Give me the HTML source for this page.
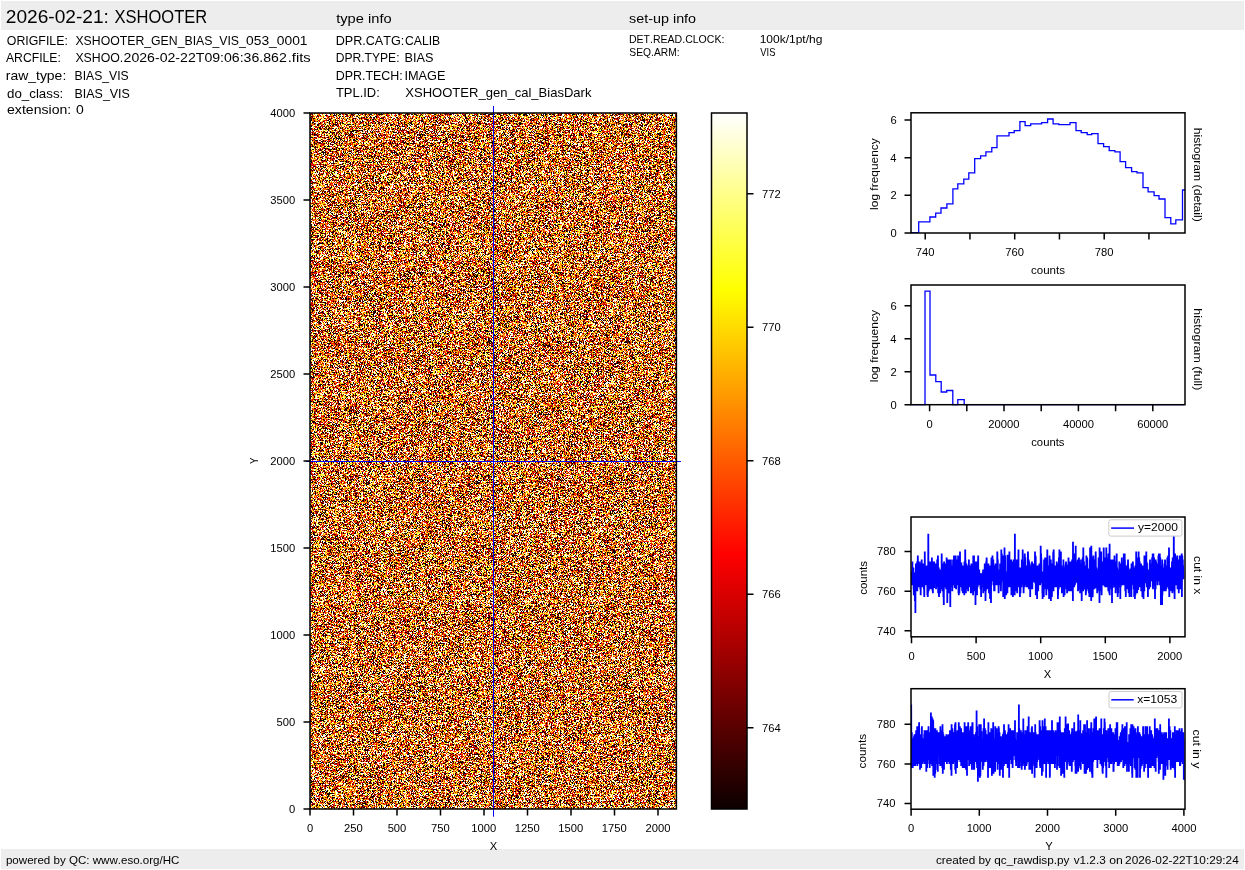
<!DOCTYPE html><html><head><meta charset="utf-8"><style>html,body{margin:0;padding:0;background:#fff;overflow:hidden}svg{display:block;will-change:transform}text{font-family:'Liberation Sans', sans-serif;font-kerning:none}</style></head><body>
<svg width="1245" height="870" viewBox="0 0 1245 870">
<rect x="0" y="0" width="1245" height="870" fill="#fff"/>
<defs>
<filter id="noise" x="0" y="0" width="1" height="1" filterUnits="objectBoundingBox" color-interpolation-filters="sRGB">
<feTurbulence type="fractalNoise" baseFrequency="2.31" numOctaves="1" seed="5" result="a"/>
<feTurbulence type="fractalNoise" baseFrequency="3.71" numOctaves="1" seed="17" result="b"/>
<feComposite in="a" in2="b" operator="arithmetic" k1="0" k2="0.5" k3="0.5" k4="0" result="c"/>
<feColorMatrix in="c" type="matrix" values="0.5 0.5 0 0 0  0.5 0.5 0 0 0  0.5 0.5 0 0 0  0 0 0 0 1"/>
<feComponentTransfer><feFuncR type="discrete" tableValues="0.042 0.042 0.042 0.042 0.042 0.042 0.042 0.042 0.042 0.042 0.042 0.042 0.042 0.042 0.042 0.042 0.042 0.042 0.042 0.042 0.042 0.042 0.042 0.042 0.042 0.042 0.042 0.042 0.042 0.042 0.042 0.042 0.042 0.042 0.042 0.042 0.042 0.042 0.042 0.042 0.042 0.042 0.042 0.042 0.042 0.042 0.042 0.042 0.042 0.042 0.042 0.042 0.042 0.042 0.042 0.042 0.042 0.042 0.042 0.042 0.042 0.042 0.042 0.042 0.042 0.042 0.042 0.042 0.042 0.042 0.042 0.042 0.042 0.042 0.042 0.042 0.042 0.042 0.042 0.042 0.042 0.042 0.042 0.042 0.042 0.042 0.042 0.042 0.042 0.042 0.042 0.042 0.042 0.042 0.042 0.042 0.042 0.042 0.042 0.042 0.042 0.042 0.042 0.042 0.042 0.042 0.042 0.042 0.042 0.042 0.042 0.042 0.042 0.097 0.097 0.097 0.349 0.349 0.349 0.6 0.6 0.852 0.852 0.852 1 1 1 1 1 1 1 1 1 1 1 1 1 1 1 1 1 1 1 1 1 1 1 1 1 1 1 1 1 1 1 1 1 1 1 1 1 1 1 1 1 1 1 1 1 1 1 1 1 1 1 1 1 1 1 1 1 1 1 1 1 1 1 1 1 1 1 1 1 1 1 1 1 1 1 1 1 1 1 1 1 1 1 1 1 1 1 1 1 1 1 1 1 1 1 1 1 1 1 1 1 1 1 1 1 1 1 1 1 1 1 1 1 1 1 1 1 1 1 1 1 1 1 1 1 1 1 1 1 1 1 1"/><feFuncG type="discrete" tableValues="0 0 0 0 0 0 0 0 0 0 0 0 0 0 0 0 0 0 0 0 0 0 0 0 0 0 0 0 0 0 0 0 0 0 0 0 0 0 0 0 0 0 0 0 0 0 0 0 0 0 0 0 0 0 0 0 0 0 0 0 0 0 0 0 0 0 0 0 0 0 0 0 0 0 0 0 0 0 0 0 0 0 0 0 0 0 0 0 0 0 0 0 0 0 0 0 0 0 0 0 0 0 0 0 0 0 0 0 0 0 0 0 0 0 0 0 0 0 0 0 0 0 0 0 0.104 0.104 0.104 0.355 0.355 0.607 0.607 0.607 0.859 0.859 1 1 1 1 1 1 1 1 1 1 1 1 1 1 1 1 1 1 1 1 1 1 1 1 1 1 1 1 1 1 1 1 1 1 1 1 1 1 1 1 1 1 1 1 1 1 1 1 1 1 1 1 1 1 1 1 1 1 1 1 1 1 1 1 1 1 1 1 1 1 1 1 1 1 1 1 1 1 1 1 1 1 1 1 1 1 1 1 1 1 1 1 1 1 1 1 1 1 1 1 1 1 1 1 1 1 1 1 1 1 1 1 1 1 1 1 1 1 1 1 1 1"/><feFuncB type="discrete" tableValues="0 0 0 0 0 0 0 0 0 0 0 0 0 0 0 0 0 0 0 0 0 0 0 0 0 0 0 0 0 0 0 0 0 0 0 0 0 0 0 0 0 0 0 0 0 0 0 0 0 0 0 0 0 0 0 0 0 0 0 0 0 0 0 0 0 0 0 0 0 0 0 0 0 0 0 0 0 0 0 0 0 0 0 0 0 0 0 0 0 0 0 0 0 0 0 0 0 0 0 0 0 0 0 0 0 0 0 0 0 0 0 0 0 0 0 0 0 0 0 0 0 0 0 0 0 0 0 0 0 0 0 0 0 0 0.166 0.166 0.166 0.543 0.543 0.543 0.921 0.921 1 1 1 1 1 1 1 1 1 1 1 1 1 1 1 1 1 1 1 1 1 1 1 1 1 1 1 1 1 1 1 1 1 1 1 1 1 1 1 1 1 1 1 1 1 1 1 1 1 1 1 1 1 1 1 1 1 1 1 1 1 1 1 1 1 1 1 1 1 1 1 1 1 1 1 1 1 1 1 1 1 1 1 1 1 1 1 1 1 1 1 1 1 1 1 1 1 1 1 1 1 1 1 1 1 1 1 1 1 1 1 1 1 1"/></feComponentTransfer>
</filter>
<linearGradient id="cbar" x1="0" y1="0" x2="0" y2="1"><stop offset="0.00000" stop-color="rgb(255,255,255)"/><stop offset="0.25397" stop-color="rgb(255,255,0)"/><stop offset="0.63492" stop-color="rgb(255,0,0)"/><stop offset="1.00000" stop-color="rgb(11,0,0)"/></linearGradient>
<clipPath id="cpx"><rect x="911" y="517" width="274" height="120"/></clipPath>
<clipPath id="cpy"><rect x="911" y="688.7" width="274" height="120.5"/></clipPath>
<clipPath id="cph1"><rect x="911" y="112.8" width="274" height="120.2"/></clipPath>
</defs>
<rect x="1" y="1" width="1243" height="29" fill="#ededed"/>
<rect x="1" y="849" width="1243" height="20" fill="#ededed"/>
<g>
<text x="5.74" y="23.30" font-size="17.9" textLength="103.21" lengthAdjust="spacingAndGlyphs" fill="#000">2026-02-21:</text>
<text x="114.53" y="23.30" font-size="17.9" textLength="92.64" lengthAdjust="spacingAndGlyphs" fill="#000">XSHOOTER</text>
<text x="336.18" y="22.70" font-size="12.6" textLength="55.44" lengthAdjust="spacingAndGlyphs" fill="#000">type info</text>
<text x="629.10" y="22.70" font-size="12.6" textLength="67.00" lengthAdjust="spacingAndGlyphs" fill="#000">set-up info</text>
<text x="6.82" y="44.70" font-size="12.6" textLength="61.01" lengthAdjust="spacingAndGlyphs" fill="#000">ORIGFILE:</text>
<text x="75.42" y="44.70" font-size="12.6" textLength="170.44" lengthAdjust="spacingAndGlyphs" fill="#000">XSHOOTER_GEN_BIAS_VIS_</text>
<text x="246.06" y="44.70" font-size="12.6" textLength="61.52" lengthAdjust="spacingAndGlyphs" fill="#000">053_0001</text>
<text x="5.98" y="61.80" font-size="12.6" textLength="54.94" lengthAdjust="spacingAndGlyphs" fill="#000">ARCFILE:</text>
<text x="75.42" y="61.80" font-size="12.6" textLength="47.90" lengthAdjust="spacingAndGlyphs" fill="#000">XSHOO.</text>
<text x="123.59" y="61.80" font-size="12.6" textLength="163.22" lengthAdjust="spacingAndGlyphs" fill="#000">2026-02-22T09:06:36.862</text>
<text x="287.75" y="61.80" font-size="12.6" textLength="22.98" lengthAdjust="spacingAndGlyphs" fill="#000">.fits</text>
<text x="5.77" y="80.00" font-size="12.6" textLength="60.50" lengthAdjust="spacingAndGlyphs" fill="#000">raw_type:</text>
<text x="74.60" y="80.00" font-size="12.6" textLength="54.16" lengthAdjust="spacingAndGlyphs" fill="#000">BIAS_VIS</text>
<text x="7.04" y="97.60" font-size="12.6" textLength="56.28" lengthAdjust="spacingAndGlyphs" fill="#000">do_class:</text>
<text x="74.58" y="97.60" font-size="12.6" textLength="55.29" lengthAdjust="spacingAndGlyphs" fill="#000">BIAS_VIS</text>
<text x="7.00" y="113.60" font-size="12.6" textLength="64.29" lengthAdjust="spacingAndGlyphs" fill="#000">extension:</text>
<text x="75.95" y="113.60" font-size="12.6" textLength="7.79" lengthAdjust="spacingAndGlyphs" fill="#000">0</text>
<text x="335.67" y="44.80" font-size="12.6" textLength="68.58" lengthAdjust="spacingAndGlyphs" fill="#000">DPR.CATG:</text>
<text x="404.98" y="44.80" font-size="12.6" textLength="35.26" lengthAdjust="spacingAndGlyphs" fill="#000">CALIB</text>
<text x="335.71" y="61.80" font-size="12.6" textLength="63.79" lengthAdjust="spacingAndGlyphs" fill="#000">DPR.TYPE:</text>
<text x="404.56" y="61.80" font-size="12.6" textLength="28.92" lengthAdjust="spacingAndGlyphs" fill="#000">BIAS</text>
<text x="335.68" y="79.50" font-size="12.6" textLength="67.16" lengthAdjust="spacingAndGlyphs" fill="#000">DPR.TECH:</text>
<text x="404.43" y="79.50" font-size="12.6" textLength="41.02" lengthAdjust="spacingAndGlyphs" fill="#000">IMAGE</text>
<text x="335.91" y="96.60" font-size="12.6" textLength="43.87" lengthAdjust="spacingAndGlyphs" fill="#000">TPL.ID:</text>
<text x="405.31" y="96.60" font-size="12.6" textLength="186.17" lengthAdjust="spacingAndGlyphs" fill="#000">XSHOOTER_gen_cal_BiasDark</text>
<text x="628.94" y="42.85" font-size="10.9" textLength="95.43" lengthAdjust="spacingAndGlyphs" fill="#000">DET.READ.CLOCK:</text>
<text x="759.69" y="42.85" font-size="10.9" textLength="62.69" lengthAdjust="spacingAndGlyphs" fill="#000">100k/1pt/hg</text>
<text x="629.33" y="55.70" font-size="10.9" textLength="50.31" lengthAdjust="spacingAndGlyphs" fill="#000">SEQ.ARM:</text>
<text x="760.26" y="55.70" font-size="10.9" textLength="15.17" lengthAdjust="spacingAndGlyphs" fill="#000">VIS</text>
<text x="5.95" y="864.10" font-size="11.5" textLength="173.49" lengthAdjust="spacingAndGlyphs" fill="#000">powered by QC: www.eso.org/HC</text>
<text x="935.90" y="863.80" font-size="11.5" textLength="133.62" lengthAdjust="spacingAndGlyphs" fill="#000">created by qc_rawdisp.py</text>
<text x="1073.66" y="863.80" font-size="11.5" textLength="32.06" lengthAdjust="spacingAndGlyphs" fill="#000">v1.2.3</text>
<text x="1109.29" y="863.80" font-size="11.5" textLength="13.61" lengthAdjust="spacingAndGlyphs" fill="#000">on</text>
<text x="1125.11" y="863.80" font-size="11.5" textLength="113.64" lengthAdjust="spacingAndGlyphs" fill="#000">2026-02-22T10:29:24</text>
</g>
<rect x="310" y="113" width="366.4" height="696" fill="#c07040" filter="url(#noise)"/>
<line x1="493.5" y1="106" x2="493.5" y2="816.7" stroke="#0000ff" stroke-width="1"/>
<line x1="306" y1="461.5" x2="681" y2="461.5" stroke="#0000ff" stroke-width="1"/>
<rect x="310" y="113" width="366.4" height="696" fill="none" stroke="#000" stroke-width="1.5"/>
<text x="288.91" y="812.85" font-size="11.2" textLength="6.23" lengthAdjust="spacingAndGlyphs" fill="#000">0</text>
<text x="276.45" y="725.85" font-size="11.2" textLength="18.69" lengthAdjust="spacingAndGlyphs" fill="#000">500</text>
<text x="270.22" y="638.85" font-size="11.2" textLength="24.92" lengthAdjust="spacingAndGlyphs" fill="#000">1000</text>
<text x="270.22" y="551.85" font-size="11.2" textLength="24.92" lengthAdjust="spacingAndGlyphs" fill="#000">1500</text>
<text x="270.22" y="464.85" font-size="11.2" textLength="24.92" lengthAdjust="spacingAndGlyphs" fill="#000">2000</text>
<text x="270.22" y="377.85" font-size="11.2" textLength="24.92" lengthAdjust="spacingAndGlyphs" fill="#000">2500</text>
<text x="270.22" y="290.85" font-size="11.2" textLength="24.92" lengthAdjust="spacingAndGlyphs" fill="#000">3000</text>
<text x="270.22" y="203.85" font-size="11.2" textLength="24.92" lengthAdjust="spacingAndGlyphs" fill="#000">3500</text>
<text x="270.22" y="116.85" font-size="11.2" textLength="24.92" lengthAdjust="spacingAndGlyphs" fill="#000">4000</text>
<text x="306.89" y="831.90" font-size="11.2" textLength="6.23" lengthAdjust="spacingAndGlyphs" fill="#000">0</text>
<text x="344.09" y="831.90" font-size="11.2" textLength="18.69" lengthAdjust="spacingAndGlyphs" fill="#000">250</text>
<text x="387.65" y="831.90" font-size="11.2" textLength="18.69" lengthAdjust="spacingAndGlyphs" fill="#000">500</text>
<text x="431.09" y="831.90" font-size="11.2" textLength="18.69" lengthAdjust="spacingAndGlyphs" fill="#000">750</text>
<text x="471.33" y="831.90" font-size="11.2" textLength="24.92" lengthAdjust="spacingAndGlyphs" fill="#000">1000</text>
<text x="514.83" y="831.90" font-size="11.2" textLength="24.92" lengthAdjust="spacingAndGlyphs" fill="#000">1250</text>
<text x="558.33" y="831.90" font-size="11.2" textLength="24.92" lengthAdjust="spacingAndGlyphs" fill="#000">1500</text>
<text x="601.83" y="831.90" font-size="11.2" textLength="24.92" lengthAdjust="spacingAndGlyphs" fill="#000">1750</text>
<text x="645.48" y="831.90" font-size="11.2" textLength="24.92" lengthAdjust="spacingAndGlyphs" fill="#000">2000</text>
<path d="M303.5,809.00H310M303.5,722.00H310M303.5,635.00H310M303.5,548.00H310M303.5,461.00H310M303.5,374.00H310M303.5,287.00H310M303.5,200.00H310M303.5,113.00H310M310.00,809V815.5M353.50,809V815.5M397.00,809V815.5M440.50,809V815.5M484.00,809V815.5M527.50,809V815.5M571.00,809V815.5M614.50,809V815.5M658.00,809V815.5" stroke="#000" stroke-width="1.5" fill="none"/>
<text x="489.76" y="849.90" font-size="11.2" textLength="7.47" lengthAdjust="spacingAndGlyphs" fill="#000">X</text>
<text transform="translate(257.90,0) rotate(-90)" x="-464.11" y="0" font-size="11.2" textLength="6.42" lengthAdjust="spacingAndGlyphs" fill="#000">Y</text>
<rect x="711.5" y="113" width="35.5" height="696" fill="url(#cbar)" stroke="#000" stroke-width="1.5"/>
<text x="762.03" y="197.70" font-size="11.2" textLength="18.69" lengthAdjust="spacingAndGlyphs" fill="#000">772</text>
<text x="762.03" y="331.17" font-size="11.2" textLength="18.69" lengthAdjust="spacingAndGlyphs" fill="#000">770</text>
<text x="762.03" y="464.65" font-size="11.2" textLength="18.69" lengthAdjust="spacingAndGlyphs" fill="#000">768</text>
<text x="762.03" y="598.12" font-size="11.2" textLength="18.69" lengthAdjust="spacingAndGlyphs" fill="#000">766</text>
<text x="762.03" y="731.60" font-size="11.2" textLength="18.69" lengthAdjust="spacingAndGlyphs" fill="#000">764</text>
<path d="M747,193.80H753.5M747,327.27H753.5M747,460.75H753.5M747,594.22H753.5M747,727.70H753.5" stroke="#000" stroke-width="1.5" fill="none"/>
<path clip-path="url(#cph1)" d="M911,232.6 L918.7,232.6 L918.7,221.8 L929.9,221.8 L929.9,217 L935.7,217 L935.7,213.2 L941,213.2 L941,208 L946.9,208 L946.9,203.9 L952.9,203.9 L952.9,188.8 L957.8,188.8 L957.8,183.9 L963.8,183.9 L963.8,179.1 L968.8,179.1 L968.8,172.8 L974.7,172.8 L974.7,158.7 L980.6,158.7 L980.6,155.9 L985.9,155.9 L985.9,151.9 L991.8,151.9 L991.8,147.7 L997,147.7 L997,135.9 L1009,135.9 L1009,132.7 L1014.2,132.7 L1014.2,130.6 L1019.9,130.6 L1019.9,121.7 L1025.1,121.7 L1025.1,125.7 L1030.7,125.7 L1030.7,123.8 L1041.6,123.8 L1041.6,122.7 L1047.6,122.7 L1047.6,119 L1053.1,119 L1053.1,123.8 L1058.8,123.8 L1058.8,124.7 L1070,124.7 L1070,122.7 L1076,122.7 L1076,130.6 L1081.2,130.6 L1081.2,132.7 L1087.2,132.7 L1087.2,134.7 L1091.7,134.7 L1091.7,133.6 L1098,133.6 L1098,143.6 L1103.6,143.6 L1103.6,146.6 L1109.2,146.6 L1109.2,150.7 L1114.9,150.7 L1114.9,151.9 L1120.1,151.9 L1120.1,161.6 L1125.6,161.6 L1125.6,167.6 L1131.6,167.6 L1131.6,171.6 L1137,171.6 L1137,172.8 L1143,172.8 L1143,187.7 L1148.1,187.7 L1148.1,191.8 L1154.1,191.8 L1154.1,195.7 L1159,195.7 L1159,199 L1165,199 L1165,217.6 L1170.8,217.6 L1170.8,223.9 L1175.8,223.9 L1175.8,219.9 L1182.5,219.9 L1182.5,190 L1186,190" stroke="#0000ff" stroke-width="1.3" fill="none" stroke-linejoin="miter"/>
<rect x="911" y="112.8" width="274" height="120.2" fill="none" stroke="#000" stroke-width="1.5"/>
<text x="890.41" y="236.85" font-size="11.2" textLength="6.23" lengthAdjust="spacingAndGlyphs" fill="#000">0</text>
<text x="890.53" y="199.19" font-size="11.2" textLength="6.23" lengthAdjust="spacingAndGlyphs" fill="#000">2</text>
<text x="890.30" y="161.53" font-size="11.2" textLength="6.23" lengthAdjust="spacingAndGlyphs" fill="#000">4</text>
<text x="890.46" y="123.87" font-size="11.2" textLength="6.23" lengthAdjust="spacingAndGlyphs" fill="#000">6</text>
<text x="915.79" y="255.90" font-size="11.2" textLength="18.69" lengthAdjust="spacingAndGlyphs" fill="#000">740</text>
<text x="1005.29" y="255.90" font-size="11.2" textLength="18.69" lengthAdjust="spacingAndGlyphs" fill="#000">760</text>
<text x="1094.79" y="255.90" font-size="11.2" textLength="18.69" lengthAdjust="spacingAndGlyphs" fill="#000">780</text>
<path d="M904.5,233.00H911M904.5,195.34H911M904.5,157.68H911M904.5,120.02H911M925.20,233V239.5M969.95,233V239.5M1014.70,233V239.5M1059.45,233V239.5M1104.20,233V239.5M1148.95,233V239.5" stroke="#000" stroke-width="1.5" fill="none"/>
<text x="1031.01" y="273.70" font-size="11.2" textLength="34.01" lengthAdjust="spacingAndGlyphs" fill="#000">counts</text>
<text transform="translate(878.10,0) rotate(-90)" x="-209.90" y="0" font-size="11.2" textLength="71.63" lengthAdjust="spacingAndGlyphs" fill="#000">log frequency</text>
<text transform="translate(1193.60,0) rotate(90)" x="127.76" y="0" font-size="11.2" textLength="94.10" lengthAdjust="spacingAndGlyphs" fill="#000">histogram (detail)</text>
<path d="M911,404.7 L925,404.7 L925,291.2 L930,291.2 L930,375 L935.8,375 L935.8,381.7 L941.2,381.7 L941.2,392 L946.7,392 L946.7,390.5 L952.8,390.5 L952.8,404.7 L957.8,404.7 L957.8,399.7 L964.2,399.7 L964.2,404.7 L1184,404.7" stroke="#0000ff" stroke-width="1.3" fill="none"/>
<rect x="911" y="285" width="274" height="119.69999999999999" fill="none" stroke="#000" stroke-width="1.5"/>
<text x="890.41" y="408.55" font-size="11.2" textLength="6.23" lengthAdjust="spacingAndGlyphs" fill="#000">0</text>
<text x="890.53" y="375.59" font-size="11.2" textLength="6.23" lengthAdjust="spacingAndGlyphs" fill="#000">2</text>
<text x="890.30" y="342.63" font-size="11.2" textLength="6.23" lengthAdjust="spacingAndGlyphs" fill="#000">4</text>
<text x="890.46" y="309.67" font-size="11.2" textLength="6.23" lengthAdjust="spacingAndGlyphs" fill="#000">6</text>
<text x="926.49" y="428.20" font-size="11.2" textLength="6.23" lengthAdjust="spacingAndGlyphs" fill="#000">0</text>
<text x="988.36" y="428.20" font-size="11.2" textLength="31.14" lengthAdjust="spacingAndGlyphs" fill="#000">20000</text>
<text x="1062.92" y="428.20" font-size="11.2" textLength="31.14" lengthAdjust="spacingAndGlyphs" fill="#000">40000</text>
<text x="1137.16" y="428.20" font-size="11.2" textLength="31.14" lengthAdjust="spacingAndGlyphs" fill="#000">60000</text>
<path d="M904.5,404.70H911M904.5,371.74H911M904.5,338.78H911M904.5,305.82H911M929.60,404.7V411.2M966.80,404.7V411.2M1004.00,404.7V411.2M1041.20,404.7V411.2M1078.40,404.7V411.2M1115.60,404.7V411.2M1152.80,404.7V411.2" stroke="#000" stroke-width="1.5" fill="none"/>
<text x="1031.22" y="445.50" font-size="11.2" textLength="33.29" lengthAdjust="spacingAndGlyphs" fill="#000">counts</text>
<text transform="translate(878.10,0) rotate(-90)" x="-382.31" y="0" font-size="11.2" textLength="72.34" lengthAdjust="spacingAndGlyphs" fill="#000">log frequency</text>
<text transform="translate(1193.60,0) rotate(90)" x="308.34" y="0" font-size="11.2" textLength="81.93" lengthAdjust="spacingAndGlyphs" fill="#000">histogram (full)</text>
<path clip-path="url(#cpx)" d="M911.5,575.4 911.6,571.4 911.8,577.3 911.9,585.3 912.0,579.3 912.1,585.3 912.3,575.4 912.4,561.5 912.5,581.3 912.7,581.3 912.8,569.4 912.9,571.4 913.1,573.4 913.2,585.3 913.3,575.4 913.4,567.4 913.6,589.2 913.7,579.3 913.8,595.2 914.0,589.2 914.1,595.2 914.2,577.3 914.3,589.2 914.5,573.4 914.6,573.4 914.7,577.3 914.9,601.1 915.0,581.3 915.1,575.4 915.2,573.4 915.4,613.0 915.5,579.3 915.6,585.3 915.8,583.3 915.9,563.5 916.0,583.3 916.2,575.4 916.3,565.5 916.4,581.3 916.5,577.3 916.7,573.4 916.8,575.4 916.9,587.2 917.1,575.4 917.2,561.5 917.3,591.2 917.4,567.4 917.6,573.4 917.7,581.3 917.8,555.6 918.0,567.4 918.1,587.2 918.2,575.4 918.3,569.4 918.5,577.3 918.6,567.4 918.7,575.4 918.9,569.4 919.0,561.5 919.1,583.3 919.3,573.4 919.4,579.3 919.5,573.4 919.6,587.2 919.8,581.3 919.9,577.3 920.0,565.5 920.2,563.5 920.3,589.2 920.4,583.3 920.5,569.4 920.7,595.2 920.8,579.3 920.9,577.3 921.1,561.5 921.2,567.4 921.3,579.3 921.4,579.3 921.6,577.3 921.7,559.5 921.8,579.3 922.0,579.3 922.1,571.4 922.2,577.3 922.4,577.3 922.5,587.2 922.6,575.4 922.7,579.3 922.9,563.5 923.0,569.4 923.1,575.4 923.3,569.4 923.4,579.3 923.5,565.5 923.6,575.4 923.8,569.4 923.9,589.2 924.0,571.4 924.2,593.2 924.3,597.1 924.4,579.3 924.5,585.3 924.7,573.4 924.8,551.6 924.9,583.3 925.1,581.3 925.2,573.4 925.3,569.4 925.5,577.3 925.6,577.3 925.7,567.4 925.8,569.4 926.0,585.3 926.1,575.4 926.2,575.4 926.4,585.3 926.5,573.4 926.6,583.3 926.7,565.5 926.9,573.4 927.0,575.4 927.1,581.3 927.3,577.3 927.4,595.2 927.5,587.2 927.6,571.4 927.8,597.1 927.9,567.4 928.0,593.2 928.2,567.4 928.3,533.8 928.4,567.4 928.6,573.4 928.7,591.2 928.8,563.5 928.9,561.5 929.1,575.4 929.2,577.3 929.3,577.3 929.5,585.3 929.6,563.5 929.7,581.3 929.8,575.4 930.0,583.3 930.1,581.3 930.2,589.2 930.4,561.5 930.5,577.3 930.6,565.5 930.8,575.4 930.9,583.3 931.0,579.3 931.1,581.3 931.3,575.4 931.4,579.3 931.5,579.3 931.7,589.2 931.8,583.3 931.9,557.5 932.0,581.3 932.2,585.3 932.3,571.4 932.4,561.5 932.6,591.2 932.7,577.3 932.8,581.3 932.9,593.2 933.1,567.4 933.2,575.4 933.3,575.4 933.5,583.3 933.6,571.4 933.7,581.3 933.9,577.3 934.0,587.2 934.1,587.2 934.2,561.5 934.4,581.3 934.5,571.4 934.6,575.4 934.8,579.3 934.9,581.3 935.0,569.4 935.1,579.3 935.3,577.3 935.4,575.4 935.5,563.5 935.7,567.4 935.8,571.4 935.9,581.3 936.0,589.2 936.2,565.5 936.3,565.5 936.4,577.3 936.6,569.4 936.7,567.4 936.8,567.4 937.0,565.5 937.1,579.3 937.2,559.5 937.3,587.2 937.5,567.4 937.6,569.4 937.7,565.5 937.9,555.6 938.0,559.5 938.1,587.2 938.2,593.2 938.4,567.4 938.5,585.3 938.6,575.4 938.8,567.4 938.9,593.2 939.0,597.1 939.1,573.4 939.3,575.4 939.4,577.3 939.5,575.4 939.7,583.3 939.8,591.2 939.9,577.3 940.1,585.3 940.2,593.2 940.3,569.4 940.4,575.4 940.6,571.4 940.7,585.3 940.8,581.3 941.0,585.3 941.1,585.3 941.2,573.4 941.3,583.3 941.5,571.4 941.6,571.4 941.7,553.6 941.9,589.2 942.0,565.5 942.1,575.4 942.2,575.4 942.4,591.2 942.5,579.3 942.6,567.4 942.8,575.4 942.9,575.4 943.0,579.3 943.2,563.5 943.3,575.4 943.4,597.1 943.5,583.3 943.7,595.2 943.8,605.1 943.9,581.3 944.1,561.5 944.2,575.4 944.3,587.2 944.4,585.3 944.6,563.5 944.7,573.4 944.8,575.4 945.0,575.4 945.1,575.4 945.2,567.4 945.4,569.4 945.5,573.4 945.6,585.3 945.7,569.4 945.9,583.3 946.0,563.5 946.1,589.2 946.3,577.3 946.4,575.4 946.5,589.2 946.6,557.5 946.8,559.5 946.9,579.3 947.0,567.4 947.2,571.4 947.3,603.1 947.4,573.4 947.5,575.4 947.7,575.4 947.8,587.2 947.9,577.3 948.1,577.3 948.2,563.5 948.3,571.4 948.5,575.4 948.6,559.5 948.7,581.3 948.8,579.3 949.0,593.2 949.1,559.5 949.2,565.5 949.4,565.5 949.5,569.4 949.6,573.4 949.7,573.4 949.9,577.3 950.0,577.3 950.1,575.4 950.3,607.0 950.4,569.4 950.5,575.4 950.6,581.3 950.8,581.3 950.9,559.5 951.0,569.4 951.2,575.4 951.3,579.3 951.4,587.2 951.6,575.4 951.7,565.5 951.8,579.3 951.9,577.3 952.1,577.3 952.2,573.4 952.3,591.2 952.5,577.3 952.6,583.3 952.7,565.5 952.8,583.3 953.0,569.4 953.1,559.5 953.2,579.3 953.4,581.3 953.5,573.4 953.6,575.4 953.7,585.3 953.9,571.4 954.0,555.6 954.1,577.3 954.3,577.3 954.4,585.3 954.5,571.4 954.7,587.2 954.8,587.2 954.9,561.5 955.0,585.3 955.2,563.5 955.3,559.5 955.4,573.4 955.6,569.4 955.7,555.6 955.8,577.3 955.9,581.3 956.1,589.2 956.2,575.4 956.3,559.5 956.5,565.5 956.6,585.3 956.7,583.3 956.8,581.3 957.0,571.4 957.1,577.3 957.2,573.4 957.4,571.4 957.5,579.3 957.6,575.4 957.8,573.4 957.9,575.4 958.0,569.4 958.1,555.6 958.3,569.4 958.4,575.4 958.5,593.2 958.7,571.4 958.8,595.2 958.9,589.2 959.0,567.4 959.2,567.4 959.3,577.3 959.4,593.2 959.6,579.3 959.7,583.3 959.8,569.4 960.0,551.6 960.1,573.4 960.2,583.3 960.3,587.2 960.5,575.4 960.6,577.3 960.7,587.2 960.9,573.4 961.0,587.2 961.1,563.5 961.2,563.5 961.4,563.5 961.5,579.3 961.6,569.4 961.8,577.3 961.9,579.3 962.0,579.3 962.1,589.2 962.3,591.2 962.4,567.4 962.5,577.3 962.7,573.4 962.8,565.5 962.9,593.2 963.1,583.3 963.2,573.4 963.3,571.4 963.4,579.3 963.6,565.5 963.7,573.4 963.8,587.2 964.0,585.3 964.1,567.4 964.2,571.4 964.3,595.2 964.5,561.5 964.6,569.4 964.7,561.5 964.9,579.3 965.0,579.3 965.1,587.2 965.2,549.6 965.4,577.3 965.5,559.5 965.6,581.3 965.8,573.4 965.9,593.2 966.0,579.3 966.2,565.5 966.3,589.2 966.4,563.5 966.5,571.4 966.7,585.3 966.8,581.3 966.9,579.3 967.1,575.4 967.2,581.3 967.3,583.3 967.4,579.3 967.6,585.3 967.7,589.2 967.8,575.4 968.0,565.5 968.1,591.2 968.2,575.4 968.3,581.3 968.5,585.3 968.6,567.4 968.7,581.3 968.9,559.5 969.0,583.3 969.1,571.4 969.3,577.3 969.4,583.3 969.5,569.4 969.6,577.3 969.8,569.4 969.9,575.4 970.0,587.2 970.2,577.3 970.3,575.4 970.4,565.5 970.5,585.3 970.7,575.4 970.8,593.2 970.9,569.4 971.1,587.2 971.2,593.2 971.3,575.4 971.4,563.5 971.6,591.2 971.7,587.2 971.8,583.3 972.0,587.2 972.1,571.4 972.2,583.3 972.4,583.3 972.5,569.4 972.6,583.3 972.7,571.4 972.9,585.3 973.0,587.2 973.1,595.2 973.3,555.6 973.4,579.3 973.5,573.4 973.6,575.4 973.8,573.4 973.9,575.4 974.0,555.6 974.2,585.3 974.3,591.2 974.4,585.3 974.5,589.2 974.7,567.4 974.8,567.4 974.9,585.3 975.1,589.2 975.2,579.3 975.3,561.5 975.5,605.1 975.6,569.4 975.7,587.2 975.8,565.5 976.0,587.2 976.1,577.3 976.2,591.2 976.4,585.3 976.5,561.5 976.6,567.4 976.7,579.3 976.9,585.3 977.0,595.2 977.1,579.3 977.3,575.4 977.4,575.4 977.5,575.4 977.7,587.2 977.8,575.4 977.9,575.4 978.0,561.5 978.2,555.6 978.3,577.3 978.4,583.3 978.6,575.4 978.7,581.3 978.8,583.3 978.9,575.4 979.1,585.3 979.2,569.4 979.3,577.3 979.5,573.4 979.6,577.3 979.7,583.3 979.8,585.3 980.0,577.3 980.1,581.3 980.2,573.4 980.4,575.4 980.5,589.2 980.6,575.4 980.8,589.2 980.9,581.3 981.0,579.3 981.1,597.1 981.3,575.4 981.4,573.4 981.5,577.3 981.7,579.3 981.8,579.3 981.9,585.3 982.0,577.3 982.2,581.3 982.3,575.4 982.4,587.2 982.6,573.4 982.7,573.4 982.8,577.3 982.9,579.3 983.1,569.4 983.2,593.2 983.3,571.4 983.5,573.4 983.6,573.4 983.7,571.4 983.9,581.3 984.0,577.3 984.1,569.4 984.2,571.4 984.4,573.4 984.5,591.2 984.6,569.4 984.8,563.5 984.9,565.5 985.0,573.4 985.1,591.2 985.3,565.5 985.4,577.3 985.5,601.1 985.7,571.4 985.8,591.2 985.9,589.2 986.0,581.3 986.2,561.5 986.3,579.3 986.4,573.4 986.6,557.5 986.7,559.5 986.8,577.3 987.0,577.3 987.1,589.2 987.2,583.3 987.3,571.4 987.5,571.4 987.6,573.4 987.7,565.5 987.9,583.3 988.0,575.4 988.1,567.4 988.2,569.4 988.4,563.5 988.5,571.4 988.6,579.3 988.8,571.4 988.9,585.3 989.0,593.2 989.1,569.4 989.3,575.4 989.4,571.4 989.5,593.2 989.7,579.3 989.8,581.3 989.9,583.3 990.1,599.1 990.2,579.3 990.3,565.5 990.4,571.4 990.6,581.3 990.7,575.4 990.8,567.4 991.0,603.1 991.1,577.3 991.2,569.4 991.3,567.4 991.5,557.5 991.6,563.5 991.7,571.4 991.9,571.4 992.0,567.4 992.1,581.3 992.2,575.4 992.4,565.5 992.5,555.6 992.6,577.3 992.8,575.4 992.9,573.4 993.0,561.5 993.2,575.4 993.3,559.5 993.4,585.3 993.5,577.3 993.7,577.3 993.8,567.4 993.9,565.5 994.1,591.2 994.2,585.3 994.3,571.4 994.4,581.3 994.6,591.2 994.7,565.5 994.8,569.4 995.0,569.4 995.1,579.3 995.2,565.5 995.4,577.3 995.5,563.5 995.6,585.3 995.7,583.3 995.9,573.4 996.0,583.3 996.1,567.4 996.3,573.4 996.4,585.3 996.5,575.4 996.6,579.3 996.8,565.5 996.9,581.3 997.0,579.3 997.2,563.5 997.3,551.6 997.4,555.6 997.5,575.4 997.7,573.4 997.8,559.5 997.9,577.3 998.1,585.3 998.2,573.4 998.3,571.4 998.5,583.3 998.6,593.2 998.7,589.2 998.8,569.4 999.0,583.3 999.1,577.3 999.2,573.4 999.4,569.4 999.5,579.3 999.6,569.4 999.7,585.3 999.9,579.3 1000.0,585.3 1000.1,563.5 1000.3,575.4 1000.4,583.3 1000.5,579.3 1000.6,577.3 1000.8,567.4 1000.9,591.2 1001.0,585.3 1001.2,579.3 1001.3,549.6 1001.4,565.5 1001.6,577.3 1001.7,567.4 1001.8,553.6 1001.9,577.3 1002.1,579.3 1002.2,563.5 1002.3,569.4 1002.5,569.4 1002.6,581.3 1002.7,555.6 1002.8,557.5 1003.0,569.4 1003.1,567.4 1003.2,597.1 1003.4,569.4 1003.5,577.3 1003.6,571.4 1003.7,567.4 1003.9,579.3 1004.0,593.2 1004.1,571.4 1004.3,583.3 1004.4,579.3 1004.5,547.6 1004.7,579.3 1004.8,599.1 1004.9,563.5 1005.0,573.4 1005.2,563.5 1005.3,555.6 1005.4,575.4 1005.6,593.2 1005.7,585.3 1005.8,587.2 1005.9,581.3 1006.1,575.4 1006.2,595.2 1006.3,571.4 1006.5,591.2 1006.6,571.4 1006.7,577.3 1006.8,579.3 1007.0,575.4 1007.1,581.3 1007.2,581.3 1007.4,593.2 1007.5,575.4 1007.6,555.6 1007.8,555.6 1007.9,561.5 1008.0,567.4 1008.1,583.3 1008.3,559.5 1008.4,575.4 1008.5,575.4 1008.7,579.3 1008.8,575.4 1008.9,579.3 1009.0,575.4 1009.2,587.2 1009.3,579.3 1009.4,551.6 1009.6,575.4 1009.7,577.3 1009.8,569.4 1010.0,567.4 1010.1,587.2 1010.2,577.3 1010.3,565.5 1010.5,573.4 1010.6,573.4 1010.7,559.5 1010.9,583.3 1011.0,575.4 1011.1,581.3 1011.2,559.5 1011.4,595.2 1011.5,581.3 1011.6,581.3 1011.8,569.4 1011.9,569.4 1012.0,561.5 1012.1,591.2 1012.3,567.4 1012.4,579.3 1012.5,581.3 1012.7,569.4 1012.8,585.3 1012.9,597.1 1013.1,579.3 1013.2,591.2 1013.3,581.3 1013.4,571.4 1013.6,571.4 1013.7,559.5 1013.8,577.3 1014.0,591.2 1014.1,583.3 1014.2,585.3 1014.3,587.2 1014.5,571.4 1014.6,581.3 1014.7,595.2 1014.9,533.8 1015.0,577.3 1015.1,571.4 1015.2,573.4 1015.4,569.4 1015.5,575.4 1015.6,563.5 1015.8,571.4 1015.9,571.4 1016.0,571.4 1016.2,591.2 1016.3,577.3 1016.4,577.3 1016.5,573.4 1016.7,589.2 1016.8,559.5 1016.9,573.4 1017.1,587.2 1017.2,593.2 1017.3,577.3 1017.4,575.4 1017.6,583.3 1017.7,575.4 1017.8,581.3 1018.0,569.4 1018.1,583.3 1018.2,575.4 1018.3,565.5 1018.5,549.6 1018.6,585.3 1018.7,579.3 1018.9,583.3 1019.0,567.4 1019.1,587.2 1019.3,581.3 1019.4,575.4 1019.5,585.3 1019.6,585.3 1019.8,579.3 1019.9,597.1 1020.0,591.2 1020.2,579.3 1020.3,573.4 1020.4,577.3 1020.5,593.2 1020.7,579.3 1020.8,567.4 1020.9,569.4 1021.1,575.4 1021.2,585.3 1021.3,569.4 1021.4,581.3 1021.6,587.2 1021.7,583.3 1021.8,559.5 1022.0,573.4 1022.1,563.5 1022.2,579.3 1022.4,565.5 1022.5,581.3 1022.6,577.3 1022.7,549.6 1022.9,567.4 1023.0,581.3 1023.1,575.4 1023.3,571.4 1023.4,563.5 1023.5,581.3 1023.6,593.2 1023.8,577.3 1023.9,575.4 1024.0,573.4 1024.2,561.5 1024.3,571.4 1024.4,567.4 1024.5,587.2 1024.7,565.5 1024.8,553.6 1024.9,567.4 1025.1,573.4 1025.2,573.4 1025.3,557.5 1025.5,585.3 1025.6,577.3 1025.7,571.4 1025.8,567.4 1026.0,579.3 1026.1,571.4 1026.2,577.3 1026.4,573.4 1026.5,577.3 1026.6,587.2 1026.7,575.4 1026.9,565.5 1027.0,585.3 1027.1,577.3 1027.3,569.4 1027.4,587.2 1027.5,573.4 1027.7,587.2 1027.8,563.5 1027.9,551.6 1028.0,553.6 1028.2,577.3 1028.3,567.4 1028.4,573.4 1028.6,573.4 1028.7,559.5 1028.8,589.2 1028.9,565.5 1029.1,575.4 1029.2,561.5 1029.3,573.4 1029.5,581.3 1029.6,573.4 1029.7,567.4 1029.8,575.4 1030.0,569.4 1030.1,581.3 1030.2,597.1 1030.4,565.5 1030.5,567.4 1030.6,573.4 1030.8,575.4 1030.9,565.5 1031.0,579.3 1031.1,583.3 1031.3,577.3 1031.4,563.5 1031.5,589.2 1031.7,563.5 1031.8,581.3 1031.9,587.2 1032.0,561.5 1032.2,577.3 1032.3,589.2 1032.4,579.3 1032.6,565.5 1032.7,563.5 1032.8,579.3 1032.9,571.4 1033.1,567.4 1033.2,581.3 1033.3,571.4 1033.5,575.4 1033.6,581.3 1033.7,581.3 1033.9,575.4 1034.0,575.4 1034.1,581.3 1034.2,579.3 1034.4,563.5 1034.5,573.4 1034.6,565.5 1034.8,563.5 1034.9,569.4 1035.0,551.6 1035.1,583.3 1035.3,567.4 1035.4,579.3 1035.5,555.6 1035.7,557.5 1035.8,595.2 1035.9,585.3 1036.0,569.4 1036.2,567.4 1036.3,567.4 1036.4,575.4 1036.6,571.4 1036.7,569.4 1036.8,575.4 1037.0,565.5 1037.1,599.1 1037.2,569.4 1037.3,585.3 1037.5,565.5 1037.6,577.3 1037.7,585.3 1037.9,571.4 1038.0,585.3 1038.1,585.3 1038.2,591.2 1038.4,575.4 1038.5,569.4 1038.6,565.5 1038.8,577.3 1038.9,565.5 1039.0,575.4 1039.1,575.4 1039.3,569.4 1039.4,563.5 1039.5,579.3 1039.7,577.3 1039.8,577.3 1039.9,575.4 1040.1,585.3 1040.2,565.5 1040.3,579.3 1040.4,571.4 1040.6,583.3 1040.7,545.7 1040.8,571.4 1041.0,579.3 1041.1,553.6 1041.2,571.4 1041.3,557.5 1041.5,565.5 1041.6,581.3 1041.7,579.3 1041.9,571.4 1042.0,575.4 1042.1,575.4 1042.3,577.3 1042.4,593.2 1042.5,577.3 1042.6,599.1 1042.8,571.4 1042.9,583.3 1043.0,583.3 1043.2,577.3 1043.3,573.4 1043.4,589.2 1043.5,593.2 1043.7,587.2 1043.8,597.1 1043.9,585.3 1044.1,559.5 1044.2,585.3 1044.3,569.4 1044.4,589.2 1044.6,571.4 1044.7,579.3 1044.8,575.4 1045.0,569.4 1045.1,557.5 1045.2,573.4 1045.4,573.4 1045.5,585.3 1045.6,569.4 1045.7,577.3 1045.9,567.4 1046.0,575.4 1046.1,557.5 1046.3,595.2 1046.4,579.3 1046.5,565.5 1046.6,579.3 1046.8,583.3 1046.9,577.3 1047.0,589.2 1047.2,573.4 1047.3,549.6 1047.4,563.5 1047.5,587.2 1047.7,585.3 1047.8,579.3 1047.9,565.5 1048.1,583.3 1048.2,583.3 1048.3,565.5 1048.5,567.4 1048.6,579.3 1048.7,587.2 1048.8,591.2 1049.0,583.3 1049.1,599.1 1049.2,567.4 1049.4,581.3 1049.5,569.4 1049.6,555.6 1049.7,563.5 1049.9,587.2 1050.0,565.5 1050.1,563.5 1050.3,583.3 1050.4,585.3 1050.5,577.3 1050.6,591.2 1050.8,559.5 1050.9,601.1 1051.0,587.2 1051.2,577.3 1051.3,577.3 1051.4,573.4 1051.6,573.4 1051.7,577.3 1051.8,563.5 1051.9,597.1 1052.1,575.4 1052.2,583.3 1052.3,573.4 1052.5,573.4 1052.6,585.3 1052.7,581.3 1052.8,567.4 1053.0,571.4 1053.1,583.3 1053.2,553.6 1053.4,551.6 1053.5,591.2 1053.6,571.4 1053.7,549.6 1053.9,567.4 1054.0,573.4 1054.1,577.3 1054.3,581.3 1054.4,577.3 1054.5,581.3 1054.7,567.4 1054.8,579.3 1054.9,579.3 1055.0,587.2 1055.2,575.4 1055.3,585.3 1055.4,577.3 1055.6,565.5 1055.7,571.4 1055.8,569.4 1055.9,571.4 1056.1,575.4 1056.2,577.3 1056.3,579.3 1056.5,567.4 1056.6,587.2 1056.7,561.5 1056.8,575.4 1057.0,583.3 1057.1,581.3 1057.2,583.3 1057.4,573.4 1057.5,583.3 1057.6,563.5 1057.8,583.3 1057.9,599.1 1058.0,583.3 1058.1,595.2 1058.3,575.4 1058.4,563.5 1058.5,569.4 1058.7,589.2 1058.8,583.3 1058.9,557.5 1059.0,571.4 1059.2,575.4 1059.3,565.5 1059.4,549.6 1059.6,561.5 1059.7,573.4 1059.8,571.4 1060.0,569.4 1060.1,581.3 1060.2,587.2 1060.3,575.4 1060.5,585.3 1060.6,575.4 1060.7,575.4 1060.9,551.6 1061.0,583.3 1061.1,577.3 1061.2,577.3 1061.4,571.4 1061.5,565.5 1061.6,581.3 1061.8,583.3 1061.9,593.2 1062.0,585.3 1062.1,569.4 1062.3,575.4 1062.4,585.3 1062.5,579.3 1062.7,575.4 1062.8,569.4 1062.9,581.3 1063.1,577.3 1063.2,593.2 1063.3,587.2 1063.4,559.5 1063.6,597.1 1063.7,579.3 1063.8,573.4 1064.0,579.3 1064.1,583.3 1064.2,575.4 1064.3,575.4 1064.5,575.4 1064.6,595.2 1064.7,577.3 1064.9,583.3 1065.0,581.3 1065.1,573.4 1065.2,569.4 1065.4,565.5 1065.5,581.3 1065.6,565.5 1065.8,563.5 1065.9,563.5 1066.0,561.5 1066.2,577.3 1066.3,577.3 1066.4,567.4 1066.5,589.2 1066.7,573.4 1066.8,581.3 1066.9,579.3 1067.1,593.2 1067.2,585.3 1067.3,575.4 1067.4,565.5 1067.6,565.5 1067.7,575.4 1067.8,577.3 1068.0,583.3 1068.1,571.4 1068.2,577.3 1068.3,569.4 1068.5,557.5 1068.6,575.4 1068.7,591.2 1068.9,583.3 1069.0,591.2 1069.1,587.2 1069.3,561.5 1069.4,573.4 1069.5,591.2 1069.6,569.4 1069.8,561.5 1069.9,579.3 1070.0,583.3 1070.2,579.3 1070.3,573.4 1070.4,569.4 1070.5,563.5 1070.7,563.5 1070.8,563.5 1070.9,561.5 1071.1,569.4 1071.2,591.2 1071.3,577.3 1071.4,571.4 1071.6,579.3 1071.7,565.5 1071.8,579.3 1072.0,585.3 1072.1,559.5 1072.2,569.4 1072.4,573.4 1072.5,565.5 1072.6,563.5 1072.7,571.4 1072.9,601.1 1073.0,541.7 1073.1,579.3 1073.3,585.3 1073.4,573.4 1073.5,563.5 1073.6,581.3 1073.8,587.2 1073.9,553.6 1074.0,579.3 1074.2,587.2 1074.3,573.4 1074.4,571.4 1074.6,583.3 1074.7,567.4 1074.8,581.3 1074.9,585.3 1075.1,573.4 1075.2,567.4 1075.3,581.3 1075.5,571.4 1075.6,575.4 1075.7,545.7 1075.8,583.3 1076.0,561.5 1076.1,575.4 1076.2,577.3 1076.4,567.4 1076.5,565.5 1076.6,561.5 1076.7,571.4 1076.9,581.3 1077.0,581.3 1077.1,569.4 1077.3,569.4 1077.4,561.5 1077.5,571.4 1077.7,563.5 1077.8,559.5 1077.9,573.4 1078.0,591.2 1078.2,587.2 1078.3,589.2 1078.4,559.5 1078.6,583.3 1078.7,563.5 1078.8,569.4 1078.9,557.5 1079.1,565.5 1079.2,577.3 1079.3,577.3 1079.5,575.4 1079.6,573.4 1079.7,581.3 1079.8,575.4 1080.0,559.5 1080.1,593.2 1080.2,573.4 1080.4,585.3 1080.5,573.4 1080.6,567.4 1080.8,575.4 1080.9,567.4 1081.0,591.2 1081.1,563.5 1081.3,581.3 1081.4,569.4 1081.5,573.4 1081.7,601.1 1081.8,583.3 1081.9,573.4 1082.0,559.5 1082.2,573.4 1082.3,573.4 1082.4,589.2 1082.6,561.5 1082.7,557.5 1082.8,575.4 1082.9,577.3 1083.1,591.2 1083.2,565.5 1083.3,547.6 1083.5,567.4 1083.6,561.5 1083.7,569.4 1083.9,585.3 1084.0,561.5 1084.1,587.2 1084.2,577.3 1084.4,573.4 1084.5,565.5 1084.6,571.4 1084.8,571.4 1084.9,583.3 1085.0,589.2 1085.1,575.4 1085.3,583.3 1085.4,589.2 1085.5,589.2 1085.7,581.3 1085.8,595.2 1085.9,589.2 1086.0,593.2 1086.2,573.4 1086.3,571.4 1086.4,555.6 1086.6,591.2 1086.7,583.3 1086.8,565.5 1087.0,577.3 1087.1,579.3 1087.2,557.5 1087.3,579.3 1087.5,587.2 1087.6,589.2 1087.7,571.4 1087.9,571.4 1088.0,589.2 1088.1,585.3 1088.2,569.4 1088.4,569.4 1088.5,581.3 1088.6,569.4 1088.8,569.4 1088.9,593.2 1089.0,579.3 1089.2,571.4 1089.3,581.3 1089.4,597.1 1089.5,577.3 1089.7,567.4 1089.8,559.5 1089.9,597.1 1090.1,547.6 1090.2,587.2 1090.3,565.5 1090.4,563.5 1090.6,565.5 1090.7,573.4 1090.8,587.2 1091.0,569.4 1091.1,583.3 1091.2,601.1 1091.3,545.7 1091.5,567.4 1091.6,557.5 1091.7,585.3 1091.9,559.5 1092.0,559.5 1092.1,559.5 1092.3,575.4 1092.4,587.2 1092.5,577.3 1092.6,597.1 1092.8,593.2 1092.9,575.4 1093.0,585.3 1093.2,577.3 1093.3,577.3 1093.4,555.6 1093.5,561.5 1093.7,575.4 1093.8,563.5 1093.9,583.3 1094.1,579.3 1094.2,565.5 1094.3,587.2 1094.4,577.3 1094.6,589.2 1094.7,573.4 1094.8,559.5 1095.0,583.3 1095.1,573.4 1095.2,585.3 1095.4,587.2 1095.5,587.2 1095.6,559.5 1095.7,551.6 1095.9,569.4 1096.0,583.3 1096.1,567.4 1096.3,579.3 1096.4,567.4 1096.5,571.4 1096.6,573.4 1096.8,569.4 1096.9,581.3 1097.0,579.3 1097.2,593.2 1097.3,579.3 1097.4,589.2 1097.5,577.3 1097.7,585.3 1097.8,573.4 1097.9,571.4 1098.1,589.2 1098.2,583.3 1098.3,585.3 1098.5,567.4 1098.6,557.5 1098.7,567.4 1098.8,579.3 1099.0,559.5 1099.1,591.2 1099.2,559.5 1099.4,581.3 1099.5,603.1 1099.6,547.6 1099.7,559.5 1099.9,585.3 1100.0,573.4 1100.1,577.3 1100.3,573.4 1100.4,591.2 1100.5,583.3 1100.6,571.4 1100.8,573.4 1100.9,563.5 1101.0,575.4 1101.2,551.6 1101.3,583.3 1101.4,573.4 1101.6,595.2 1101.7,589.2 1101.8,561.5 1101.9,585.3 1102.1,569.4 1102.2,575.4 1102.3,585.3 1102.5,579.3 1102.6,581.3 1102.7,581.3 1102.8,567.4 1103.0,569.4 1103.1,581.3 1103.2,585.3 1103.4,573.4 1103.5,577.3 1103.6,565.5 1103.7,547.6 1103.9,567.4 1104.0,575.4 1104.1,577.3 1104.3,583.3 1104.4,585.3 1104.5,585.3 1104.7,579.3 1104.8,579.3 1104.9,567.4 1105.0,579.3 1105.2,577.3 1105.3,587.2 1105.4,557.5 1105.6,569.4 1105.7,557.5 1105.8,567.4 1105.9,559.5 1106.1,577.3 1106.2,567.4 1106.3,547.6 1106.5,587.2 1106.6,563.5 1106.7,557.5 1106.9,571.4 1107.0,567.4 1107.1,561.5 1107.2,581.3 1107.4,571.4 1107.5,585.3 1107.6,583.3 1107.8,581.3 1107.9,577.3 1108.0,573.4 1108.1,571.4 1108.3,591.2 1108.4,553.6 1108.5,563.5 1108.7,567.4 1108.8,579.3 1108.9,575.4 1109.0,569.4 1109.2,571.4 1109.3,593.2 1109.4,567.4 1109.6,543.7 1109.7,595.2 1109.8,565.5 1110.0,571.4 1110.1,577.3 1110.2,561.5 1110.3,587.2 1110.5,573.4 1110.6,559.5 1110.7,577.3 1110.9,579.3 1111.0,573.4 1111.1,579.3 1111.2,559.5 1111.4,585.3 1111.5,565.5 1111.6,589.2 1111.8,567.4 1111.9,577.3 1112.0,603.1 1112.1,575.4 1112.3,587.2 1112.4,579.3 1112.5,559.5 1112.7,587.2 1112.8,587.2 1112.9,559.5 1113.1,573.4 1113.2,559.5 1113.3,571.4 1113.4,585.3 1113.6,575.4 1113.7,561.5 1113.8,565.5 1114.0,575.4 1114.1,575.4 1114.2,577.3 1114.3,581.3 1114.5,555.6 1114.6,575.4 1114.7,587.2 1114.9,581.3 1115.0,567.4 1115.1,569.4 1115.2,577.3 1115.4,583.3 1115.5,575.4 1115.6,593.2 1115.8,589.2 1115.9,567.4 1116.0,581.3 1116.2,571.4 1116.3,561.5 1116.4,569.4 1116.5,575.4 1116.7,553.6 1116.8,567.4 1116.9,579.3 1117.1,567.4 1117.2,571.4 1117.3,585.3 1117.4,575.4 1117.6,577.3 1117.7,597.1 1117.8,577.3 1118.0,579.3 1118.1,579.3 1118.2,593.2 1118.3,579.3 1118.5,575.4 1118.6,573.4 1118.7,587.2 1118.9,569.4 1119.0,587.2 1119.1,577.3 1119.3,561.5 1119.4,583.3 1119.5,581.3 1119.6,563.5 1119.8,579.3 1119.9,579.3 1120.0,573.4 1120.2,563.5 1120.3,599.1 1120.4,583.3 1120.5,585.3 1120.7,587.2 1120.8,585.3 1120.9,583.3 1121.1,571.4 1121.2,585.3 1121.3,573.4 1121.5,571.4 1121.6,583.3 1121.7,573.4 1121.8,557.5 1122.0,571.4 1122.1,581.3 1122.2,575.4 1122.4,585.3 1122.5,573.4 1122.6,565.5 1122.7,583.3 1122.9,577.3 1123.0,563.5 1123.1,581.3 1123.3,573.4 1123.4,585.3 1123.5,583.3 1123.6,581.3 1123.8,553.6 1123.9,579.3 1124.0,581.3 1124.2,581.3 1124.3,577.3 1124.4,569.4 1124.6,573.4 1124.7,553.6 1124.8,573.4 1124.9,559.5 1125.1,573.4 1125.2,569.4 1125.3,591.2 1125.5,577.3 1125.6,575.4 1125.7,577.3 1125.8,597.1 1126.0,565.5 1126.1,579.3 1126.2,579.3 1126.4,577.3 1126.5,577.3 1126.6,571.4 1126.7,589.2 1126.9,585.3 1127.0,571.4 1127.1,573.4 1127.3,579.3 1127.4,581.3 1127.5,583.3 1127.7,575.4 1127.8,563.5 1127.9,587.2 1128.0,559.5 1128.2,567.4 1128.3,579.3 1128.4,567.4 1128.6,591.2 1128.7,593.2 1128.8,589.2 1128.9,579.3 1129.1,579.3 1129.2,581.3 1129.3,573.4 1129.5,597.1 1129.6,569.4 1129.7,589.2 1129.8,581.3 1130.0,579.3 1130.1,587.2 1130.2,589.2 1130.4,585.3 1130.5,575.4 1130.6,569.4 1130.8,569.4 1130.9,585.3 1131.0,583.3 1131.1,585.3 1131.3,571.4 1131.4,597.1 1131.5,563.5 1131.7,581.3 1131.8,583.3 1131.9,571.4 1132.0,565.5 1132.2,571.4 1132.3,565.5 1132.4,573.4 1132.6,563.5 1132.7,563.5 1132.8,577.3 1132.9,561.5 1133.1,573.4 1133.2,575.4 1133.3,585.3 1133.5,579.3 1133.6,567.4 1133.7,589.2 1133.9,569.4 1134.0,571.4 1134.1,573.4 1134.2,597.1 1134.4,577.3 1134.5,569.4 1134.6,583.3 1134.8,575.4 1134.9,599.1 1135.0,569.4 1135.1,581.3 1135.3,565.5 1135.4,595.2 1135.5,567.4 1135.7,577.3 1135.8,567.4 1135.9,585.3 1136.0,581.3 1136.2,551.6 1136.3,583.3 1136.4,583.3 1136.6,577.3 1136.7,585.3 1136.8,563.5 1137.0,557.5 1137.1,583.3 1137.2,593.2 1137.3,563.5 1137.5,563.5 1137.6,567.4 1137.7,563.5 1137.9,585.3 1138.0,577.3 1138.1,589.2 1138.2,589.2 1138.4,565.5 1138.5,581.3 1138.6,551.6 1138.8,575.4 1138.9,581.3 1139.0,567.4 1139.2,557.5 1139.3,569.4 1139.4,587.2 1139.5,571.4 1139.7,561.5 1139.8,581.3 1139.9,583.3 1140.1,565.5 1140.2,573.4 1140.3,587.2 1140.4,579.3 1140.6,583.3 1140.7,571.4 1140.8,573.4 1141.0,563.5 1141.1,567.4 1141.2,591.2 1141.3,571.4 1141.5,565.5 1141.6,571.4 1141.7,565.5 1141.9,581.3 1142.0,585.3 1142.1,565.5 1142.3,587.2 1142.4,597.1 1142.5,565.5 1142.6,583.3 1142.8,579.3 1142.9,589.2 1143.0,589.2 1143.2,587.2 1143.3,579.3 1143.4,571.4 1143.5,599.1 1143.7,567.4 1143.8,587.2 1143.9,587.2 1144.1,567.4 1144.2,575.4 1144.3,591.2 1144.4,555.6 1144.6,583.3 1144.7,573.4 1144.8,573.4 1145.0,561.5 1145.1,579.3 1145.2,565.5 1145.4,583.3 1145.5,563.5 1145.6,583.3 1145.7,579.3 1145.9,555.6 1146.0,571.4 1146.1,573.4 1146.3,551.6 1146.4,571.4 1146.5,583.3 1146.6,567.4 1146.8,587.2 1146.9,563.5 1147.0,563.5 1147.2,581.3 1147.3,581.3 1147.4,573.4 1147.5,575.4 1147.7,585.3 1147.8,569.4 1147.9,597.1 1148.1,579.3 1148.2,579.3 1148.3,577.3 1148.5,571.4 1148.6,587.2 1148.7,569.4 1148.8,577.3 1149.0,581.3 1149.1,589.2 1149.2,587.2 1149.4,571.4 1149.5,585.3 1149.6,575.4 1149.7,563.5 1149.9,565.5 1150.0,559.5 1150.1,579.3 1150.3,587.2 1150.4,565.5 1150.5,571.4 1150.6,563.5 1150.8,575.4 1150.9,563.5 1151.0,567.4 1151.2,567.4 1151.3,569.4 1151.4,571.4 1151.6,573.4 1151.7,573.4 1151.8,565.5 1151.9,581.3 1152.1,557.5 1152.2,577.3 1152.3,565.5 1152.5,575.4 1152.6,577.3 1152.7,553.6 1152.8,579.3 1153.0,589.2 1153.1,583.3 1153.2,579.3 1153.4,553.6 1153.5,573.4 1153.6,565.5 1153.8,585.3 1153.9,571.4 1154.0,569.4 1154.1,557.5 1154.3,583.3 1154.4,569.4 1154.5,571.4 1154.7,585.3 1154.8,575.4 1154.9,577.3 1155.0,599.1 1155.2,569.4 1155.3,569.4 1155.4,579.3 1155.6,589.2 1155.7,559.5 1155.8,573.4 1155.9,565.5 1156.1,561.5 1156.2,581.3 1156.3,567.4 1156.5,577.3 1156.6,575.4 1156.7,575.4 1156.9,575.4 1157.0,563.5 1157.1,573.4 1157.2,577.3 1157.4,577.3 1157.5,571.4 1157.6,585.3 1157.8,581.3 1157.9,575.4 1158.0,581.3 1158.1,577.3 1158.3,581.3 1158.4,555.6 1158.5,561.5 1158.7,571.4 1158.8,575.4 1158.9,553.6 1159.0,571.4 1159.2,575.4 1159.3,571.4 1159.4,571.4 1159.6,561.5 1159.7,575.4 1159.8,553.6 1160.0,585.3 1160.1,567.4 1160.2,585.3 1160.3,557.5 1160.5,579.3 1160.6,575.4 1160.7,565.5 1160.9,605.1 1161.0,587.2 1161.1,579.3 1161.2,589.2 1161.4,573.4 1161.5,577.3 1161.6,579.3 1161.8,583.3 1161.9,579.3 1162.0,583.3 1162.1,605.1 1162.3,559.5 1162.4,595.2 1162.5,577.3 1162.7,579.3 1162.8,569.4 1162.9,585.3 1163.1,577.3 1163.2,585.3 1163.3,567.4 1163.4,573.4 1163.6,577.3 1163.7,571.4 1163.8,577.3 1164.0,591.2 1164.1,569.4 1164.2,573.4 1164.3,577.3 1164.5,565.5 1164.6,563.5 1164.7,587.2 1164.9,583.3 1165.0,559.5 1165.1,561.5 1165.2,583.3 1165.4,587.2 1165.5,581.3 1165.6,581.3 1165.8,591.2 1165.9,575.4 1166.0,589.2 1166.2,587.2 1166.3,565.5 1166.4,583.3 1166.5,575.4 1166.7,569.4 1166.8,567.4 1166.9,579.3 1167.1,575.4 1167.2,583.3 1167.3,557.5 1167.4,569.4 1167.6,587.2 1167.7,575.4 1167.8,567.4 1168.0,571.4 1168.1,555.6 1168.2,561.5 1168.3,581.3 1168.5,575.4 1168.6,589.2 1168.7,573.4 1168.9,573.4 1169.0,547.6 1169.1,573.4 1169.3,597.1 1169.4,581.3 1169.5,573.4 1169.6,589.2 1169.8,585.3 1169.9,579.3 1170.0,571.4 1170.2,577.3 1170.3,585.3 1170.4,567.4 1170.5,581.3 1170.7,581.3 1170.8,589.2 1170.9,583.3 1171.1,569.4 1171.2,591.2 1171.3,575.4 1171.5,567.4 1171.6,579.3 1171.7,573.4 1171.8,587.2 1172.0,561.5 1172.1,563.5 1172.2,573.4 1172.4,593.2 1172.5,585.3 1172.6,565.5 1172.7,557.5 1172.9,571.4 1173.0,563.5 1173.1,581.3 1173.3,577.3 1173.4,575.4 1173.5,571.4 1173.6,591.2 1173.8,535.8 1173.9,561.5 1174.0,587.2 1174.2,589.2 1174.3,571.4 1174.4,581.3 1174.6,599.1 1174.7,567.4 1174.8,573.4 1174.9,579.3 1175.1,553.6 1175.2,573.4 1175.3,583.3 1175.5,573.4 1175.6,585.3 1175.7,583.3 1175.8,571.4 1176.0,581.3 1176.1,579.3 1176.2,557.5 1176.4,567.4 1176.5,567.4 1176.6,569.4 1176.7,569.4 1176.9,559.5 1177.0,575.4 1177.1,555.6 1177.3,585.3 1177.4,577.3 1177.5,589.2 1177.7,579.3 1177.8,569.4 1177.9,559.5 1178.0,581.3 1178.2,575.4 1178.3,579.3 1178.4,583.3 1178.6,587.2 1178.7,575.4 1178.8,593.2 1178.9,573.4 1179.1,575.4 1179.2,581.3 1179.3,585.3 1179.5,589.2 1179.6,555.6 1179.7,589.2 1179.8,559.5 1180.0,569.4 1180.1,579.3 1180.2,587.2 1180.4,565.5 1180.5,557.5 1180.6,585.3 1180.8,579.3 1180.9,565.5 1181.0,571.4 1181.1,555.6 1181.3,581.3 1181.4,569.4 1181.5,589.2 1181.7,553.6 1181.8,583.3 1181.9,597.1 1182.0,577.3 1182.2,577.3 1182.3,555.6 1182.4,579.3 1182.6,575.4 1182.7,569.4 1182.8,559.5 1182.9,575.4 1183.1,565.5 1183.2,569.4 1183.3,579.3 1183.5,575.4" stroke="#0000ff" stroke-width="1.8" fill="none"/>
<rect x="911" y="517" width="274" height="119.79999999999995" fill="none" stroke="#000" stroke-width="1.5"/>
<text x="877.05" y="634.65" font-size="11.2" textLength="18.69" lengthAdjust="spacingAndGlyphs" fill="#000">740</text>
<text x="877.05" y="595.05" font-size="11.2" textLength="18.69" lengthAdjust="spacingAndGlyphs" fill="#000">760</text>
<text x="877.05" y="555.45" font-size="11.2" textLength="18.69" lengthAdjust="spacingAndGlyphs" fill="#000">780</text>
<text x="908.39" y="660.20" font-size="11.2" textLength="6.23" lengthAdjust="spacingAndGlyphs" fill="#000">0</text>
<text x="966.75" y="660.20" font-size="11.2" textLength="18.69" lengthAdjust="spacingAndGlyphs" fill="#000">500</text>
<text x="1028.03" y="660.20" font-size="11.2" textLength="24.92" lengthAdjust="spacingAndGlyphs" fill="#000">1000</text>
<text x="1092.63" y="660.20" font-size="11.2" textLength="24.92" lengthAdjust="spacingAndGlyphs" fill="#000">1500</text>
<text x="1157.38" y="660.20" font-size="11.2" textLength="24.92" lengthAdjust="spacingAndGlyphs" fill="#000">2000</text>
<path d="M904.5,630.80H911M904.5,591.20H911M904.5,551.60H911M911.50,636.8V643.3M976.10,636.8V643.3M1040.70,636.8V643.3M1105.30,636.8V643.3M1169.90,636.8V643.3" stroke="#000" stroke-width="1.5" fill="none"/>
<text x="1043.66" y="678.30" font-size="11.2" textLength="7.47" lengthAdjust="spacingAndGlyphs" fill="#000">X</text>
<text transform="translate(866.60,0) rotate(-90)" x="-594.89" y="0" font-size="11.2" textLength="33.90" lengthAdjust="spacingAndGlyphs" fill="#000">counts</text>
<text transform="translate(1194.00,0) rotate(90)" x="556.09" y="0" font-size="11.2" textLength="38.34" lengthAdjust="spacingAndGlyphs" fill="#000">cut in x</text>
<rect x="1108.8" y="519.8" width="73.1" height="16.3" rx="2" ry="2" fill="#fff" fill-opacity="0.8" stroke="#cccccc" stroke-width="1"/>
<line x1="1111.2" y1="528.1" x2="1134" y2="528.1" stroke="#0000ff" stroke-width="1.5"/>
<text x="1138.07" y="530.70" font-size="10.6" textLength="39.80" lengthAdjust="spacingAndGlyphs" fill="#000">y=2000</text>
<path clip-path="url(#cpy)" d="M911.1,748.1 911.2,734.2 911.2,704.5 911.3,754.0 911.4,752.0 911.4,754.0 911.5,742.1 911.6,748.1 911.6,740.1 911.7,767.9 911.8,732.2 911.9,750.0 911.9,740.1 912.0,750.0 912.1,752.0 912.1,744.1 912.2,740.1 912.3,750.0 912.3,750.0 912.4,740.1 912.5,758.0 912.5,763.9 912.6,744.1 912.7,754.0 912.7,767.9 912.8,756.0 912.9,752.0 912.9,759.9 913.0,763.9 913.1,748.1 913.1,738.2 913.2,750.0 913.3,756.0 913.4,744.1 913.4,740.1 913.5,752.0 913.6,742.1 913.6,738.2 913.7,750.0 913.8,756.0 913.8,744.1 913.9,746.1 914.0,736.2 914.0,761.9 914.1,754.0 914.2,756.0 914.2,765.9 914.3,746.1 914.4,742.1 914.4,756.0 914.5,734.2 914.6,740.1 914.6,742.1 914.7,744.1 914.8,738.2 914.9,761.9 914.9,742.1 915.0,742.1 915.1,765.9 915.1,744.1 915.2,750.0 915.3,740.1 915.3,752.0 915.4,748.1 915.5,744.1 915.5,758.0 915.6,742.1 915.7,750.0 915.7,742.1 915.8,754.0 915.9,736.2 915.9,742.1 916.0,750.0 916.1,742.1 916.1,734.2 916.2,730.2 916.3,763.9 916.4,738.2 916.4,744.1 916.5,748.1 916.6,758.0 916.6,734.2 916.7,761.9 916.8,742.1 916.8,734.2 916.9,763.9 917.0,752.0 917.0,761.9 917.1,746.1 917.2,732.2 917.2,726.3 917.3,765.9 917.4,754.0 917.4,740.1 917.5,732.2 917.6,744.1 917.6,756.0 917.7,744.1 917.8,748.1 917.9,750.0 917.9,756.0 918.0,744.1 918.1,744.1 918.1,748.1 918.2,750.0 918.3,761.9 918.3,754.0 918.4,736.2 918.5,750.0 918.5,761.9 918.6,734.2 918.7,742.1 918.7,726.3 918.8,748.1 918.9,752.0 918.9,763.9 919.0,734.2 919.1,722.3 919.1,756.0 919.2,754.0 919.3,742.1 919.4,756.0 919.4,750.0 919.5,752.0 919.6,746.1 919.6,736.2 919.7,748.1 919.8,738.2 919.8,752.0 919.9,744.1 920.0,769.8 920.0,763.9 920.1,740.1 920.2,754.0 920.2,742.1 920.3,742.1 920.4,734.2 920.4,740.1 920.5,738.2 920.6,750.0 920.6,756.0 920.7,756.0 920.8,754.0 920.9,759.9 920.9,754.0 921.0,748.1 921.1,746.1 921.1,752.0 921.2,767.9 921.3,748.1 921.3,746.1 921.4,736.2 921.5,742.1 921.5,754.0 921.6,756.0 921.7,728.3 921.7,740.1 921.8,728.3 921.9,726.3 921.9,756.0 922.0,744.1 922.1,744.1 922.1,742.1 922.2,742.1 922.3,746.1 922.4,746.1 922.4,763.9 922.5,750.0 922.6,756.0 922.6,746.1 922.7,752.0 922.8,742.1 922.8,740.1 922.9,744.1 923.0,744.1 923.0,748.1 923.1,752.0 923.2,750.0 923.2,754.0 923.3,744.1 923.4,748.1 923.4,742.1 923.5,761.9 923.6,738.2 923.6,756.0 923.7,756.0 923.8,750.0 923.9,754.0 923.9,744.1 924.0,754.0 924.1,759.9 924.1,756.0 924.2,734.2 924.3,748.1 924.3,759.9 924.4,748.1 924.5,763.9 924.5,730.2 924.6,763.9 924.7,744.1 924.7,742.1 924.8,763.9 924.9,744.1 924.9,738.2 925.0,744.1 925.1,746.1 925.1,738.2 925.2,746.1 925.3,744.1 925.4,750.0 925.4,742.1 925.5,758.0 925.6,740.1 925.6,754.0 925.7,759.9 925.8,744.1 925.8,730.2 925.9,738.2 926.0,754.0 926.0,740.1 926.1,752.0 926.2,750.0 926.2,748.1 926.3,771.8 926.4,746.1 926.4,758.0 926.5,756.0 926.6,763.9 926.6,763.9 926.7,758.0 926.8,740.1 926.9,730.2 926.9,748.1 927.0,736.2 927.1,750.0 927.1,767.9 927.2,746.1 927.3,744.1 927.3,752.0 927.4,744.1 927.5,742.1 927.5,756.0 927.6,763.9 927.7,750.0 927.7,750.0 927.8,752.0 927.9,738.2 927.9,730.2 928.0,752.0 928.1,740.1 928.1,738.2 928.2,740.1 928.3,738.2 928.4,752.0 928.4,740.1 928.5,726.3 928.6,740.1 928.6,754.0 928.7,742.1 928.8,734.2 928.8,744.1 928.9,754.0 929.0,732.2 929.0,759.9 929.1,742.1 929.2,748.1 929.2,759.9 929.3,736.2 929.4,744.1 929.4,759.9 929.5,742.1 929.6,752.0 929.7,767.9 929.7,756.0 929.8,746.1 929.9,742.1 929.9,746.1 930.0,748.1 930.1,744.1 930.1,750.0 930.2,736.2 930.3,746.1 930.3,744.1 930.4,742.1 930.5,758.0 930.5,756.0 930.6,732.2 930.7,744.1 930.7,750.0 930.8,744.1 930.9,712.4 930.9,746.1 931.0,754.0 931.1,746.1 931.2,763.9 931.2,734.2 931.3,754.0 931.4,763.9 931.4,750.0 931.5,752.0 931.6,746.1 931.6,759.9 931.7,744.1 931.8,716.4 931.8,761.9 931.9,744.1 932.0,752.0 932.0,746.1 932.1,765.9 932.2,759.9 932.2,744.1 932.3,748.1 932.4,730.2 932.4,756.0 932.5,746.1 932.6,718.4 932.7,756.0 932.7,758.0 932.8,748.1 932.9,748.1 932.9,740.1 933.0,746.1 933.1,756.0 933.1,746.1 933.2,720.3 933.3,734.2 933.3,775.8 933.4,750.0 933.5,758.0 933.5,742.1 933.6,750.0 933.7,728.3 933.7,738.2 933.8,738.2 933.9,746.1 933.9,748.1 934.0,744.1 934.1,734.2 934.2,742.1 934.2,752.0 934.3,734.2 934.4,746.1 934.4,748.1 934.5,756.0 934.6,754.0 934.6,754.0 934.7,777.8 934.8,738.2 934.8,742.1 934.9,750.0 935.0,738.2 935.0,744.1 935.1,744.1 935.2,773.8 935.2,750.0 935.3,742.1 935.4,732.2 935.4,728.3 935.5,734.2 935.6,759.9 935.7,769.8 935.7,742.1 935.8,748.1 935.9,738.2 935.9,750.0 936.0,746.1 936.1,763.9 936.1,744.1 936.2,752.0 936.3,744.1 936.3,744.1 936.4,750.0 936.5,744.1 936.5,748.1 936.6,740.1 936.7,742.1 936.7,754.0 936.8,754.0 936.9,730.2 936.9,750.0 937.0,738.2 937.1,744.1 937.2,754.0 937.2,756.0 937.3,746.1 937.4,746.1 937.4,742.1 937.5,761.9 937.6,754.0 937.6,748.1 937.7,732.2 937.8,771.8 937.8,744.1 937.9,754.0 938.0,744.1 938.0,754.0 938.1,744.1 938.2,732.2 938.2,744.1 938.3,744.1 938.4,744.1 938.4,756.0 938.5,742.1 938.6,750.0 938.7,756.0 938.7,748.1 938.8,750.0 938.9,740.1 938.9,748.1 939.0,754.0 939.1,732.2 939.1,738.2 939.2,734.2 939.3,742.1 939.3,750.0 939.4,752.0 939.5,750.0 939.5,738.2 939.6,746.1 939.7,763.9 939.7,748.1 939.8,761.9 939.9,746.1 939.9,759.9 940.0,761.9 940.1,746.1 940.2,748.1 940.2,765.9 940.3,740.1 940.4,726.3 940.4,763.9 940.5,730.2 940.6,756.0 940.6,754.0 940.7,750.0 940.8,763.9 940.8,734.2 940.9,742.1 941.0,756.0 941.0,750.0 941.1,763.9 941.2,752.0 941.2,738.2 941.3,765.9 941.4,752.0 941.4,746.1 941.5,738.2 941.6,734.2 941.7,752.0 941.7,756.0 941.8,744.1 941.9,752.0 941.9,752.0 942.0,736.2 942.1,730.2 942.1,746.1 942.2,750.0 942.3,742.1 942.3,767.9 942.4,748.1 942.5,759.9 942.5,724.3 942.6,740.1 942.7,746.1 942.7,750.0 942.8,773.8 942.9,740.1 942.9,732.2 943.0,756.0 943.1,740.1 943.2,740.1 943.2,763.9 943.3,738.2 943.4,734.2 943.4,746.1 943.5,748.1 943.6,740.1 943.6,763.9 943.7,748.1 943.8,738.2 943.8,759.9 943.9,738.2 944.0,752.0 944.0,769.8 944.1,750.0 944.2,758.0 944.2,744.1 944.3,759.9 944.4,738.2 944.4,756.0 944.5,744.1 944.6,754.0 944.7,752.0 944.7,736.2 944.8,746.1 944.9,752.0 944.9,761.9 945.0,736.2 945.1,740.1 945.1,752.0 945.2,746.1 945.3,758.0 945.3,758.0 945.4,756.0 945.5,744.1 945.5,744.1 945.6,756.0 945.7,740.1 945.7,740.1 945.8,746.1 945.9,738.2 946.0,750.0 946.0,750.0 946.1,744.1 946.2,748.1 946.2,740.1 946.3,761.9 946.4,734.2 946.4,756.0 946.5,750.0 946.6,761.9 946.6,742.1 946.7,734.2 946.8,736.2 946.8,740.1 946.9,763.9 947.0,756.0 947.0,752.0 947.1,758.0 947.2,736.2 947.2,746.1 947.3,748.1 947.4,742.1 947.5,758.0 947.5,758.0 947.6,758.0 947.7,742.1 947.7,744.1 947.8,742.1 947.9,736.2 947.9,761.9 948.0,754.0 948.1,746.1 948.1,761.9 948.2,754.0 948.3,738.2 948.3,736.2 948.4,736.2 948.5,748.1 948.5,750.0 948.6,736.2 948.7,752.0 948.7,744.1 948.8,734.2 948.9,752.0 949.0,754.0 949.0,748.1 949.1,742.1 949.2,742.1 949.2,746.1 949.3,742.1 949.4,763.9 949.4,756.0 949.5,746.1 949.6,758.0 949.6,761.9 949.7,759.9 949.8,758.0 949.8,750.0 949.9,758.0 950.0,746.1 950.0,730.2 950.1,750.0 950.2,734.2 950.2,746.1 950.3,759.9 950.4,750.0 950.5,758.0 950.5,740.1 950.6,759.9 950.7,734.2 950.7,742.1 950.8,769.8 950.9,740.1 950.9,732.2 951.0,756.0 951.1,738.2 951.1,765.9 951.2,746.1 951.3,765.9 951.3,742.1 951.4,765.9 951.5,775.8 951.5,744.1 951.6,724.3 951.7,754.0 951.7,740.1 951.8,746.1 951.9,752.0 952.0,742.1 952.0,730.2 952.1,759.9 952.2,742.1 952.2,744.1 952.3,761.9 952.4,732.2 952.4,728.3 952.5,758.0 952.6,730.2 952.6,748.1 952.7,750.0 952.8,732.2 952.8,746.1 952.9,744.1 953.0,732.2 953.0,734.2 953.1,738.2 953.2,761.9 953.2,763.9 953.3,736.2 953.4,758.0 953.5,746.1 953.5,759.9 953.6,750.0 953.7,761.9 953.7,732.2 953.8,758.0 953.9,750.0 953.9,750.0 954.0,736.2 954.1,761.9 954.1,748.1 954.2,750.0 954.3,742.1 954.3,744.1 954.4,752.0 954.5,746.1 954.5,752.0 954.6,744.1 954.7,750.0 954.7,754.0 954.8,748.1 954.9,744.1 955.0,724.3 955.0,754.0 955.1,744.1 955.2,732.2 955.2,769.8 955.3,765.9 955.4,759.9 955.4,750.0 955.5,722.3 955.6,744.1 955.6,736.2 955.7,750.0 955.8,773.8 955.8,771.8 955.9,738.2 956.0,746.1 956.0,761.9 956.1,736.2 956.2,763.9 956.2,736.2 956.3,732.2 956.4,756.0 956.5,759.9 956.5,740.1 956.6,759.9 956.7,740.1 956.7,759.9 956.8,740.1 956.9,748.1 956.9,752.0 957.0,758.0 957.1,746.1 957.1,767.9 957.2,750.0 957.3,752.0 957.3,740.1 957.4,761.9 957.5,730.2 957.5,752.0 957.6,759.9 957.7,734.2 957.7,730.2 957.8,750.0 957.9,758.0 958.0,748.1 958.0,756.0 958.1,752.0 958.2,732.2 958.2,744.1 958.3,746.1 958.4,744.1 958.4,748.1 958.5,740.1 958.6,738.2 958.6,752.0 958.7,746.1 958.8,722.3 958.8,744.1 958.9,750.0 959.0,726.3 959.0,748.1 959.1,759.9 959.2,740.1 959.2,758.0 959.3,754.0 959.4,744.1 959.5,750.0 959.5,756.0 959.6,754.0 959.7,754.0 959.7,736.2 959.8,756.0 959.9,754.0 959.9,726.3 960.0,754.0 960.1,732.2 960.1,734.2 960.2,750.0 960.3,761.9 960.3,744.1 960.4,742.1 960.5,738.2 960.5,748.1 960.6,736.2 960.7,734.2 960.7,758.0 960.8,734.2 960.9,746.1 961.0,754.0 961.0,752.0 961.1,728.3 961.2,738.2 961.2,765.9 961.3,748.1 961.4,750.0 961.4,750.0 961.5,754.0 961.6,763.9 961.6,740.1 961.7,758.0 961.8,752.0 961.8,754.0 961.9,756.0 962.0,740.1 962.0,744.1 962.1,756.0 962.2,758.0 962.2,752.0 962.3,738.2 962.4,746.1 962.5,746.1 962.5,752.0 962.6,750.0 962.7,746.1 962.7,767.9 962.8,732.2 962.9,756.0 962.9,754.0 963.0,734.2 963.1,746.1 963.1,748.1 963.2,754.0 963.3,763.9 963.3,746.1 963.4,736.2 963.5,758.0 963.5,734.2 963.6,759.9 963.7,756.0 963.8,742.1 963.8,748.1 963.9,740.1 964.0,756.0 964.0,758.0 964.1,767.9 964.2,759.9 964.2,759.9 964.3,761.9 964.4,744.1 964.4,754.0 964.5,767.9 964.6,722.3 964.6,756.0 964.7,761.9 964.8,736.2 964.8,736.2 964.9,759.9 965.0,763.9 965.0,758.0 965.1,736.2 965.2,752.0 965.3,756.0 965.3,748.1 965.4,736.2 965.5,761.9 965.5,752.0 965.6,761.9 965.7,726.3 965.7,730.2 965.8,738.2 965.9,750.0 965.9,742.1 966.0,769.8 966.1,746.1 966.1,761.9 966.2,761.9 966.3,756.0 966.3,752.0 966.4,742.1 966.5,740.1 966.5,746.1 966.6,758.0 966.7,740.1 966.8,750.0 966.8,736.2 966.9,758.0 967.0,775.8 967.0,752.0 967.1,726.3 967.2,744.1 967.2,750.0 967.3,738.2 967.4,742.1 967.4,744.1 967.5,754.0 967.6,748.1 967.6,746.1 967.7,754.0 967.8,759.9 967.8,746.1 967.9,738.2 968.0,742.1 968.0,742.1 968.1,742.1 968.2,722.3 968.3,746.1 968.3,738.2 968.4,728.3 968.5,748.1 968.5,746.1 968.6,738.2 968.7,730.2 968.7,744.1 968.8,744.1 968.9,748.1 968.9,759.9 969.0,736.2 969.1,750.0 969.1,765.9 969.2,750.0 969.3,765.9 969.3,758.0 969.4,748.1 969.5,758.0 969.5,736.2 969.6,763.9 969.7,746.1 969.8,742.1 969.8,732.2 969.9,738.2 970.0,746.1 970.0,748.1 970.1,748.1 970.2,736.2 970.2,754.0 970.3,742.1 970.4,748.1 970.4,746.1 970.5,750.0 970.6,726.3 970.6,754.0 970.7,746.1 970.8,746.1 970.8,742.1 970.9,744.1 971.0,744.1 971.0,738.2 971.1,763.9 971.2,748.1 971.3,759.9 971.3,746.1 971.4,759.9 971.5,758.0 971.5,748.1 971.6,734.2 971.7,742.1 971.7,744.1 971.8,734.2 971.9,758.0 971.9,769.8 972.0,752.0 972.1,750.0 972.1,736.2 972.2,726.3 972.3,761.9 972.3,722.3 972.4,732.2 972.5,740.1 972.5,744.1 972.6,722.3 972.7,748.1 972.8,752.0 972.8,746.1 972.9,761.9 973.0,742.1 973.0,748.1 973.1,744.1 973.2,744.1 973.2,758.0 973.3,734.2 973.4,758.0 973.4,738.2 973.5,763.9 973.6,744.1 973.6,756.0 973.7,748.1 973.8,754.0 973.8,769.8 973.9,759.9 974.0,748.1 974.0,742.1 974.1,763.9 974.2,769.8 974.3,756.0 974.3,750.0 974.4,754.0 974.5,756.0 974.5,738.2 974.6,738.2 974.7,740.1 974.7,758.0 974.8,748.1 974.9,750.0 974.9,761.9 975.0,738.2 975.1,746.1 975.1,752.0 975.2,734.2 975.3,740.1 975.3,738.2 975.4,736.2 975.5,740.1 975.5,761.9 975.6,752.0 975.7,738.2 975.8,756.0 975.8,748.1 975.9,744.1 976.0,732.2 976.0,734.2 976.1,738.2 976.2,750.0 976.2,738.2 976.3,742.1 976.4,750.0 976.4,734.2 976.5,742.1 976.6,710.4 976.6,734.2 976.7,750.0 976.8,742.1 976.8,763.9 976.9,748.1 977.0,758.0 977.0,758.0 977.1,767.9 977.2,726.3 977.3,750.0 977.3,746.1 977.4,736.2 977.5,750.0 977.5,742.1 977.6,761.9 977.7,746.1 977.7,752.0 977.8,742.1 977.9,746.1 977.9,781.7 978.0,767.9 978.1,758.0 978.1,740.1 978.2,744.1 978.3,744.1 978.3,767.9 978.4,775.8 978.5,754.0 978.5,752.0 978.6,754.0 978.7,744.1 978.8,750.0 978.8,759.9 978.9,758.0 979.0,746.1 979.0,748.1 979.1,748.1 979.2,724.3 979.2,750.0 979.3,746.1 979.4,758.0 979.4,752.0 979.5,742.1 979.6,742.1 979.6,750.0 979.7,744.1 979.8,748.1 979.8,767.9 979.9,777.8 980.0,724.3 980.1,740.1 980.1,748.1 980.2,765.9 980.3,761.9 980.3,734.2 980.4,775.8 980.5,752.0 980.5,738.2 980.6,746.1 980.7,740.1 980.7,750.0 980.8,724.3 980.9,758.0 980.9,761.9 981.0,746.1 981.1,734.2 981.1,748.1 981.2,738.2 981.3,754.0 981.3,759.9 981.4,734.2 981.5,732.2 981.6,732.2 981.6,752.0 981.7,759.9 981.8,759.9 981.8,750.0 981.9,742.1 982.0,742.1 982.0,761.9 982.1,746.1 982.2,748.1 982.2,748.1 982.3,748.1 982.4,750.0 982.4,742.1 982.5,746.1 982.6,746.1 982.6,756.0 982.7,744.1 982.8,750.0 982.8,769.8 982.9,742.1 983.0,750.0 983.1,738.2 983.1,750.0 983.2,748.1 983.3,746.1 983.3,748.1 983.4,752.0 983.5,765.9 983.5,728.3 983.6,763.9 983.7,752.0 983.7,742.1 983.8,744.1 983.9,742.1 983.9,740.1 984.0,734.2 984.1,744.1 984.1,718.4 984.2,758.0 984.3,746.1 984.3,752.0 984.4,754.0 984.5,746.1 984.6,732.2 984.6,756.0 984.7,756.0 984.8,740.1 984.8,742.1 984.9,728.3 985.0,738.2 985.0,746.1 985.1,752.0 985.2,746.1 985.2,750.0 985.3,761.9 985.4,748.1 985.4,750.0 985.5,750.0 985.6,752.0 985.6,730.2 985.7,740.1 985.8,738.2 985.8,754.0 985.9,758.0 986.0,750.0 986.1,746.1 986.1,752.0 986.2,750.0 986.3,738.2 986.3,744.1 986.4,758.0 986.5,752.0 986.5,754.0 986.6,746.1 986.7,759.9 986.7,750.0 986.8,740.1 986.9,748.1 986.9,758.0 987.0,754.0 987.1,746.1 987.1,742.1 987.2,740.1 987.3,750.0 987.3,761.9 987.4,734.2 987.5,744.1 987.6,744.1 987.6,744.1 987.7,758.0 987.8,752.0 987.8,746.1 987.9,738.2 988.0,748.1 988.0,777.8 988.1,750.0 988.2,744.1 988.2,734.2 988.3,740.1 988.4,722.3 988.4,734.2 988.5,734.2 988.6,738.2 988.6,761.9 988.7,740.1 988.8,742.1 988.8,754.0 988.9,742.1 989.0,744.1 989.1,752.0 989.1,750.0 989.2,750.0 989.3,746.1 989.3,752.0 989.4,742.1 989.5,767.9 989.5,750.0 989.6,765.9 989.7,754.0 989.7,742.1 989.8,748.1 989.9,750.0 989.9,748.1 990.0,732.2 990.1,759.9 990.1,738.2 990.2,763.9 990.3,752.0 990.3,746.1 990.4,756.0 990.5,746.1 990.6,740.1 990.6,759.9 990.7,748.1 990.8,752.0 990.8,767.9 990.9,750.0 991.0,756.0 991.0,734.2 991.1,758.0 991.2,730.2 991.2,754.0 991.3,728.3 991.4,742.1 991.4,744.1 991.5,740.1 991.6,738.2 991.6,734.2 991.7,730.2 991.8,752.0 991.8,761.9 991.9,775.8 992.0,752.0 992.1,740.1 992.1,744.1 992.2,746.1 992.3,752.0 992.3,754.0 992.4,750.0 992.5,744.1 992.5,765.9 992.6,740.1 992.7,763.9 992.7,750.0 992.8,754.0 992.9,752.0 992.9,758.0 993.0,759.9 993.1,750.0 993.1,759.9 993.2,722.3 993.3,752.0 993.3,754.0 993.4,754.0 993.5,759.9 993.6,773.8 993.6,750.0 993.7,744.1 993.8,763.9 993.8,748.1 993.9,759.9 994.0,748.1 994.0,744.1 994.1,744.1 994.2,744.1 994.2,756.0 994.3,738.2 994.4,752.0 994.4,744.1 994.5,740.1 994.6,752.0 994.6,761.9 994.7,742.1 994.8,759.9 994.8,758.0 994.9,759.9 995.0,740.1 995.1,750.0 995.1,771.8 995.2,740.1 995.3,726.3 995.3,730.2 995.4,754.0 995.5,748.1 995.5,742.1 995.6,738.2 995.7,748.1 995.7,759.9 995.8,740.1 995.9,742.1 995.9,761.9 996.0,752.0 996.1,746.1 996.1,748.1 996.2,742.1 996.3,740.1 996.4,742.1 996.4,750.0 996.5,761.9 996.6,742.1 996.6,734.2 996.7,728.3 996.8,748.1 996.8,748.1 996.9,734.2 997.0,734.2 997.0,744.1 997.1,740.1 997.2,756.0 997.2,742.1 997.3,756.0 997.4,750.0 997.4,750.0 997.5,754.0 997.6,769.8 997.6,756.0 997.7,744.1 997.8,748.1 997.9,752.0 997.9,744.1 998.0,740.1 998.1,740.1 998.1,756.0 998.2,748.1 998.3,752.0 998.3,758.0 998.4,763.9 998.5,750.0 998.5,758.0 998.6,726.3 998.7,750.0 998.7,750.0 998.8,752.0 998.9,728.3 998.9,758.0 999.0,750.0 999.1,756.0 999.1,750.0 999.2,748.1 999.3,736.2 999.4,761.9 999.4,748.1 999.5,732.2 999.6,754.0 999.6,750.0 999.7,758.0 999.8,775.8 999.8,750.0 999.9,736.2 1000.0,754.0 1000.0,767.9 1000.1,746.1 1000.2,748.1 1000.2,738.2 1000.3,738.2 1000.4,750.0 1000.4,744.1 1000.5,765.9 1000.6,736.2 1000.6,746.1 1000.7,736.2 1000.8,738.2 1000.9,752.0 1000.9,750.0 1001.0,758.0 1001.1,769.8 1001.1,750.0 1001.2,746.1 1001.3,759.9 1001.3,740.1 1001.4,748.1 1001.5,744.1 1001.5,756.0 1001.6,765.9 1001.7,740.1 1001.7,742.1 1001.8,750.0 1001.9,752.0 1001.9,752.0 1002.0,750.0 1002.1,754.0 1002.1,769.8 1002.2,740.1 1002.3,763.9 1002.4,752.0 1002.4,752.0 1002.5,746.1 1002.6,763.9 1002.6,736.2 1002.7,742.1 1002.8,740.1 1002.8,734.2 1002.9,756.0 1003.0,777.8 1003.0,744.1 1003.1,734.2 1003.2,736.2 1003.2,754.0 1003.3,750.0 1003.4,746.1 1003.4,765.9 1003.5,756.0 1003.6,754.0 1003.6,732.2 1003.7,754.0 1003.8,732.2 1003.9,748.1 1003.9,765.9 1004.0,724.3 1004.1,758.0 1004.1,742.1 1004.2,730.2 1004.3,754.0 1004.3,759.9 1004.4,738.2 1004.5,748.1 1004.5,759.9 1004.6,759.9 1004.7,752.0 1004.7,738.2 1004.8,750.0 1004.9,742.1 1004.9,730.2 1005.0,734.2 1005.1,734.2 1005.1,736.2 1005.2,763.9 1005.3,736.2 1005.4,744.1 1005.4,750.0 1005.5,759.9 1005.6,763.9 1005.6,759.9 1005.7,748.1 1005.8,759.9 1005.8,756.0 1005.9,754.0 1006.0,742.1 1006.0,752.0 1006.1,750.0 1006.2,734.2 1006.2,752.0 1006.3,742.1 1006.4,758.0 1006.4,744.1 1006.5,746.1 1006.6,746.1 1006.6,752.0 1006.7,758.0 1006.8,752.0 1006.9,752.0 1006.9,738.2 1007.0,738.2 1007.1,759.9 1007.1,742.1 1007.2,752.0 1007.3,744.1 1007.3,754.0 1007.4,763.9 1007.5,738.2 1007.5,744.1 1007.6,759.9 1007.7,767.9 1007.7,754.0 1007.8,759.9 1007.9,752.0 1007.9,742.1 1008.0,732.2 1008.1,752.0 1008.1,734.2 1008.2,736.2 1008.3,752.0 1008.4,765.9 1008.4,740.1 1008.5,742.1 1008.6,724.3 1008.6,734.2 1008.7,740.1 1008.8,730.2 1008.8,758.0 1008.9,746.1 1009.0,750.0 1009.0,730.2 1009.1,742.1 1009.2,777.8 1009.2,734.2 1009.3,758.0 1009.4,740.1 1009.4,752.0 1009.5,746.1 1009.6,742.1 1009.6,746.1 1009.7,758.0 1009.8,734.2 1009.9,744.1 1009.9,748.1 1010.0,740.1 1010.1,754.0 1010.1,728.3 1010.2,746.1 1010.3,744.1 1010.3,744.1 1010.4,758.0 1010.5,759.9 1010.5,746.1 1010.6,744.1 1010.7,734.2 1010.7,744.1 1010.8,759.9 1010.9,742.1 1010.9,740.1 1011.0,738.2 1011.1,744.1 1011.1,759.9 1011.2,736.2 1011.3,756.0 1011.4,742.1 1011.4,763.9 1011.5,740.1 1011.6,756.0 1011.6,736.2 1011.7,730.2 1011.8,736.2 1011.8,759.9 1011.9,758.0 1012.0,756.0 1012.0,740.1 1012.1,744.1 1012.2,746.1 1012.2,744.1 1012.3,742.1 1012.4,742.1 1012.4,730.2 1012.5,748.1 1012.6,746.1 1012.6,767.9 1012.7,761.9 1012.8,756.0 1012.9,759.9 1012.9,746.1 1013.0,738.2 1013.1,752.0 1013.1,752.0 1013.2,754.0 1013.3,746.1 1013.3,754.0 1013.4,744.1 1013.5,744.1 1013.5,744.1 1013.6,740.1 1013.7,748.1 1013.7,746.1 1013.8,730.2 1013.9,748.1 1013.9,740.1 1014.0,748.1 1014.1,752.0 1014.2,752.0 1014.2,756.0 1014.3,748.1 1014.4,754.0 1014.4,752.0 1014.5,736.2 1014.6,750.0 1014.6,736.2 1014.7,746.1 1014.8,740.1 1014.8,754.0 1014.9,746.1 1015.0,720.3 1015.0,740.1 1015.1,738.2 1015.2,746.1 1015.2,740.1 1015.3,759.9 1015.4,756.0 1015.4,744.1 1015.5,740.1 1015.6,752.0 1015.7,750.0 1015.7,752.0 1015.8,750.0 1015.9,759.9 1015.9,761.9 1016.0,748.1 1016.1,765.9 1016.1,758.0 1016.2,754.0 1016.3,759.9 1016.3,746.1 1016.4,752.0 1016.5,750.0 1016.5,758.0 1016.6,756.0 1016.7,742.1 1016.7,744.1 1016.8,754.0 1016.9,744.1 1016.9,746.1 1017.0,746.1 1017.1,732.2 1017.2,752.0 1017.2,744.1 1017.3,744.1 1017.4,750.0 1017.4,759.9 1017.5,742.1 1017.6,746.1 1017.6,748.1 1017.7,748.1 1017.8,748.1 1017.8,758.0 1017.9,746.1 1018.0,767.9 1018.0,748.1 1018.1,763.9 1018.2,752.0 1018.2,742.1 1018.3,752.0 1018.4,754.0 1018.4,744.1 1018.5,752.0 1018.6,752.0 1018.7,752.0 1018.7,732.2 1018.8,742.1 1018.9,704.5 1018.9,759.9 1019.0,742.1 1019.1,761.9 1019.1,744.1 1019.2,759.9 1019.3,728.3 1019.3,765.9 1019.4,736.2 1019.5,740.1 1019.5,767.9 1019.6,752.0 1019.7,734.2 1019.7,736.2 1019.8,765.9 1019.9,754.0 1019.9,759.9 1020.0,759.9 1020.1,756.0 1020.2,730.2 1020.2,748.1 1020.3,752.0 1020.4,752.0 1020.4,742.1 1020.5,742.1 1020.6,758.0 1020.6,734.2 1020.7,759.9 1020.8,752.0 1020.8,744.1 1020.9,730.2 1021.0,752.0 1021.0,746.1 1021.1,736.2 1021.2,742.1 1021.2,736.2 1021.3,738.2 1021.4,746.1 1021.4,742.1 1021.5,740.1 1021.6,748.1 1021.7,732.2 1021.7,769.8 1021.8,758.0 1021.9,734.2 1021.9,744.1 1022.0,756.0 1022.1,744.1 1022.1,738.2 1022.2,754.0 1022.3,740.1 1022.3,750.0 1022.4,750.0 1022.5,750.0 1022.5,738.2 1022.6,759.9 1022.7,752.0 1022.7,742.1 1022.8,761.9 1022.9,765.9 1022.9,742.1 1023.0,748.1 1023.1,750.0 1023.2,748.1 1023.2,758.0 1023.3,718.4 1023.4,758.0 1023.4,754.0 1023.5,763.9 1023.6,752.0 1023.6,732.2 1023.7,748.1 1023.8,742.1 1023.8,754.0 1023.9,730.2 1024.0,746.1 1024.0,761.9 1024.1,740.1 1024.2,752.0 1024.2,742.1 1024.3,748.1 1024.4,746.1 1024.4,748.1 1024.5,758.0 1024.6,763.9 1024.7,738.2 1024.7,750.0 1024.8,746.1 1024.9,754.0 1024.9,769.8 1025.0,761.9 1025.1,734.2 1025.1,756.0 1025.2,752.0 1025.3,763.9 1025.3,754.0 1025.4,752.0 1025.5,750.0 1025.5,750.0 1025.6,756.0 1025.7,754.0 1025.7,748.1 1025.8,746.1 1025.9,750.0 1025.9,730.2 1026.0,746.1 1026.1,748.1 1026.2,756.0 1026.2,738.2 1026.3,759.9 1026.4,765.9 1026.4,758.0 1026.5,742.1 1026.6,759.9 1026.6,736.2 1026.7,748.1 1026.8,763.9 1026.8,752.0 1026.9,730.2 1027.0,758.0 1027.0,761.9 1027.1,744.1 1027.2,736.2 1027.2,738.2 1027.3,752.0 1027.4,746.1 1027.4,746.1 1027.5,736.2 1027.6,726.3 1027.7,750.0 1027.7,736.2 1027.8,752.0 1027.9,742.1 1027.9,758.0 1028.0,756.0 1028.1,744.1 1028.1,758.0 1028.2,740.1 1028.3,754.0 1028.3,748.1 1028.4,750.0 1028.5,752.0 1028.5,748.1 1028.6,738.2 1028.7,716.4 1028.7,761.9 1028.8,746.1 1028.9,750.0 1028.9,758.0 1029.0,746.1 1029.1,758.0 1029.2,750.0 1029.2,736.2 1029.3,769.8 1029.4,746.1 1029.4,744.1 1029.5,758.0 1029.6,744.1 1029.6,746.1 1029.7,752.0 1029.8,736.2 1029.8,761.9 1029.9,742.1 1030.0,752.0 1030.0,759.9 1030.1,750.0 1030.2,752.0 1030.2,740.1 1030.3,763.9 1030.4,750.0 1030.5,754.0 1030.5,732.2 1030.6,759.9 1030.7,738.2 1030.7,767.9 1030.8,746.1 1030.9,750.0 1030.9,744.1 1031.0,756.0 1031.1,769.8 1031.1,763.9 1031.2,736.2 1031.3,746.1 1031.3,758.0 1031.4,740.1 1031.5,756.0 1031.5,756.0 1031.6,761.9 1031.7,736.2 1031.7,728.3 1031.8,758.0 1031.9,746.1 1032.0,738.2 1032.0,726.3 1032.1,773.8 1032.2,748.1 1032.2,742.1 1032.3,763.9 1032.4,744.1 1032.4,746.1 1032.5,742.1 1032.6,756.0 1032.6,744.1 1032.7,756.0 1032.8,742.1 1032.8,748.1 1032.9,752.0 1033.0,763.9 1033.0,732.2 1033.1,738.2 1033.2,740.1 1033.2,756.0 1033.3,752.0 1033.4,732.2 1033.5,742.1 1033.5,758.0 1033.6,748.1 1033.7,748.1 1033.7,752.0 1033.8,758.0 1033.9,736.2 1033.9,742.1 1034.0,752.0 1034.1,765.9 1034.1,756.0 1034.2,748.1 1034.3,740.1 1034.3,752.0 1034.4,738.2 1034.5,748.1 1034.5,756.0 1034.6,777.8 1034.7,761.9 1034.7,763.9 1034.8,750.0 1034.9,746.1 1035.0,734.2 1035.0,748.1 1035.1,759.9 1035.2,724.3 1035.2,746.1 1035.3,752.0 1035.4,752.0 1035.4,761.9 1035.5,742.1 1035.6,744.1 1035.6,732.2 1035.7,738.2 1035.8,740.1 1035.8,736.2 1035.9,752.0 1036.0,754.0 1036.0,750.0 1036.1,761.9 1036.2,750.0 1036.2,752.0 1036.3,742.1 1036.4,748.1 1036.5,767.9 1036.5,748.1 1036.6,734.2 1036.7,767.9 1036.7,756.0 1036.8,748.1 1036.9,761.9 1036.9,754.0 1037.0,748.1 1037.1,761.9 1037.1,746.1 1037.2,744.1 1037.3,761.9 1037.3,748.1 1037.4,738.2 1037.5,750.0 1037.5,744.1 1037.6,742.1 1037.7,750.0 1037.7,738.2 1037.8,744.1 1037.9,758.0 1038.0,744.1 1038.0,740.1 1038.1,740.1 1038.2,756.0 1038.2,744.1 1038.3,734.2 1038.4,746.1 1038.4,736.2 1038.5,734.2 1038.6,748.1 1038.6,742.1 1038.7,752.0 1038.8,738.2 1038.8,750.0 1038.9,754.0 1039.0,748.1 1039.0,750.0 1039.1,744.1 1039.2,744.1 1039.2,759.9 1039.3,756.0 1039.4,744.1 1039.5,744.1 1039.5,748.1 1039.6,720.3 1039.7,736.2 1039.7,748.1 1039.8,740.1 1039.9,734.2 1039.9,744.1 1040.0,765.9 1040.1,748.1 1040.1,748.1 1040.2,726.3 1040.3,767.9 1040.3,732.2 1040.4,750.0 1040.5,738.2 1040.5,752.0 1040.6,746.1 1040.7,736.2 1040.7,748.1 1040.8,736.2 1040.9,748.1 1041.0,752.0 1041.0,750.0 1041.1,754.0 1041.2,750.0 1041.2,734.2 1041.3,759.9 1041.4,765.9 1041.4,748.1 1041.5,730.2 1041.6,736.2 1041.6,734.2 1041.7,734.2 1041.8,756.0 1041.8,746.1 1041.9,775.8 1042.0,754.0 1042.0,742.1 1042.1,763.9 1042.2,769.8 1042.2,761.9 1042.3,746.1 1042.4,736.2 1042.5,720.3 1042.5,732.2 1042.6,763.9 1042.7,771.8 1042.7,746.1 1042.8,736.2 1042.9,763.9 1042.9,754.0 1043.0,752.0 1043.1,748.1 1043.1,750.0 1043.2,742.1 1043.3,736.2 1043.3,746.1 1043.4,740.1 1043.5,726.3 1043.5,758.0 1043.6,758.0 1043.7,742.1 1043.7,728.3 1043.8,746.1 1043.9,736.2 1044.0,750.0 1044.0,738.2 1044.1,754.0 1044.2,740.1 1044.2,744.1 1044.3,744.1 1044.4,732.2 1044.4,736.2 1044.5,754.0 1044.6,738.2 1044.6,763.9 1044.7,736.2 1044.8,718.4 1044.8,742.1 1044.9,742.1 1045.0,746.1 1045.0,738.2 1045.1,752.0 1045.2,740.1 1045.2,750.0 1045.3,752.0 1045.4,746.1 1045.5,748.1 1045.5,763.9 1045.6,726.3 1045.7,746.1 1045.7,763.9 1045.8,736.2 1045.9,748.1 1045.9,744.1 1046.0,740.1 1046.1,756.0 1046.1,777.8 1046.2,748.1 1046.3,744.1 1046.3,736.2 1046.4,754.0 1046.5,750.0 1046.5,742.1 1046.6,750.0 1046.7,750.0 1046.7,744.1 1046.8,758.0 1046.9,730.2 1047.0,756.0 1047.0,746.1 1047.1,750.0 1047.2,754.0 1047.2,742.1 1047.3,736.2 1047.4,732.2 1047.4,740.1 1047.5,752.0 1047.6,738.2 1047.6,761.9 1047.7,746.1 1047.8,742.1 1047.8,740.1 1047.9,758.0 1048.0,761.9 1048.0,730.2 1048.1,752.0 1048.2,763.9 1048.3,759.9 1048.3,746.1 1048.4,734.2 1048.5,746.1 1048.5,734.2 1048.6,744.1 1048.7,742.1 1048.7,736.2 1048.8,750.0 1048.9,744.1 1048.9,752.0 1049.0,754.0 1049.1,740.1 1049.1,756.0 1049.2,746.1 1049.3,756.0 1049.3,748.1 1049.4,752.0 1049.5,736.2 1049.5,746.1 1049.6,746.1 1049.7,730.2 1049.8,777.8 1049.8,758.0 1049.9,775.8 1050.0,748.1 1050.0,742.1 1050.1,740.1 1050.2,744.1 1050.2,756.0 1050.3,730.2 1050.4,744.1 1050.4,750.0 1050.5,759.9 1050.6,744.1 1050.6,752.0 1050.7,752.0 1050.8,746.1 1050.8,746.1 1050.9,756.0 1051.0,734.2 1051.0,758.0 1051.1,759.9 1051.2,744.1 1051.3,746.1 1051.3,746.1 1051.4,752.0 1051.5,748.1 1051.5,754.0 1051.6,763.9 1051.7,740.1 1051.7,758.0 1051.8,750.0 1051.9,740.1 1051.9,748.1 1052.0,720.3 1052.1,761.9 1052.1,756.0 1052.2,746.1 1052.3,734.2 1052.3,750.0 1052.4,761.9 1052.5,736.2 1052.5,758.0 1052.6,750.0 1052.7,738.2 1052.8,754.0 1052.8,752.0 1052.9,742.1 1053.0,750.0 1053.0,744.1 1053.1,758.0 1053.2,750.0 1053.2,759.9 1053.3,763.9 1053.4,730.2 1053.4,744.1 1053.5,738.2 1053.6,758.0 1053.6,748.1 1053.7,750.0 1053.8,761.9 1053.8,742.1 1053.9,756.0 1054.0,750.0 1054.0,763.9 1054.1,738.2 1054.2,740.1 1054.3,744.1 1054.3,758.0 1054.4,754.0 1054.5,736.2 1054.5,750.0 1054.6,746.1 1054.7,746.1 1054.7,759.9 1054.8,732.2 1054.9,767.9 1054.9,746.1 1055.0,748.1 1055.1,763.9 1055.1,744.1 1055.2,742.1 1055.3,748.1 1055.3,756.0 1055.4,744.1 1055.5,736.2 1055.5,746.1 1055.6,730.2 1055.7,740.1 1055.8,740.1 1055.8,734.2 1055.9,754.0 1056.0,754.0 1056.0,742.1 1056.1,742.1 1056.2,732.2 1056.2,736.2 1056.3,746.1 1056.4,746.1 1056.4,750.0 1056.5,752.0 1056.6,752.0 1056.6,738.2 1056.7,752.0 1056.8,752.0 1056.8,746.1 1056.9,754.0 1057.0,750.0 1057.0,769.8 1057.1,744.1 1057.2,750.0 1057.3,746.1 1057.3,744.1 1057.4,765.9 1057.5,722.3 1057.5,746.1 1057.6,746.1 1057.7,765.9 1057.7,740.1 1057.8,742.1 1057.9,750.0 1057.9,744.1 1058.0,734.2 1058.1,750.0 1058.1,756.0 1058.2,732.2 1058.3,744.1 1058.3,748.1 1058.4,722.3 1058.5,744.1 1058.5,748.1 1058.6,744.1 1058.7,750.0 1058.8,744.1 1058.8,744.1 1058.9,754.0 1059.0,750.0 1059.0,744.1 1059.1,742.1 1059.2,740.1 1059.2,738.2 1059.3,744.1 1059.4,742.1 1059.4,750.0 1059.5,750.0 1059.6,736.2 1059.6,767.9 1059.7,742.1 1059.8,716.4 1059.8,765.9 1059.9,732.2 1060.0,765.9 1060.0,744.1 1060.1,730.2 1060.2,732.2 1060.3,756.0 1060.3,759.9 1060.4,761.9 1060.5,740.1 1060.5,752.0 1060.6,748.1 1060.7,744.1 1060.7,744.1 1060.8,742.1 1060.9,746.1 1060.9,763.9 1061.0,732.2 1061.1,775.8 1061.1,734.2 1061.2,754.0 1061.3,750.0 1061.3,752.0 1061.4,752.0 1061.5,748.1 1061.5,750.0 1061.6,758.0 1061.7,738.2 1061.8,754.0 1061.8,734.2 1061.9,750.0 1062.0,754.0 1062.0,744.1 1062.1,738.2 1062.2,758.0 1062.2,750.0 1062.3,732.2 1062.4,758.0 1062.4,756.0 1062.5,746.1 1062.6,759.9 1062.6,773.8 1062.7,763.9 1062.8,744.1 1062.8,740.1 1062.9,742.1 1063.0,744.1 1063.0,759.9 1063.1,740.1 1063.2,736.2 1063.3,754.0 1063.3,738.2 1063.4,752.0 1063.5,746.1 1063.5,744.1 1063.6,763.9 1063.7,732.2 1063.7,756.0 1063.8,748.1 1063.9,752.0 1063.9,742.1 1064.0,744.1 1064.1,748.1 1064.1,732.2 1064.2,744.1 1064.3,752.0 1064.3,777.8 1064.4,750.0 1064.5,750.0 1064.5,756.0 1064.6,756.0 1064.7,742.1 1064.8,736.2 1064.8,728.3 1064.9,736.2 1065.0,754.0 1065.0,744.1 1065.1,761.9 1065.2,740.1 1065.2,744.1 1065.3,754.0 1065.4,748.1 1065.4,750.0 1065.5,754.0 1065.6,734.2 1065.6,716.4 1065.7,738.2 1065.8,736.2 1065.8,746.1 1065.9,752.0 1066.0,724.3 1066.1,752.0 1066.1,744.1 1066.2,748.1 1066.3,742.1 1066.3,748.1 1066.4,742.1 1066.5,759.9 1066.5,748.1 1066.6,734.2 1066.7,758.0 1066.7,754.0 1066.8,734.2 1066.9,744.1 1066.9,736.2 1067.0,769.8 1067.1,746.1 1067.1,759.9 1067.2,761.9 1067.3,744.1 1067.3,736.2 1067.4,763.9 1067.5,759.9 1067.6,754.0 1067.6,748.1 1067.7,761.9 1067.8,724.3 1067.8,742.1 1067.9,752.0 1068.0,754.0 1068.0,724.3 1068.1,724.3 1068.2,752.0 1068.2,744.1 1068.3,734.2 1068.4,759.9 1068.4,754.0 1068.5,734.2 1068.6,754.0 1068.6,752.0 1068.7,761.9 1068.8,756.0 1068.8,740.1 1068.9,756.0 1069.0,761.9 1069.1,754.0 1069.1,730.2 1069.2,746.1 1069.3,754.0 1069.3,746.1 1069.4,744.1 1069.5,746.1 1069.5,765.9 1069.6,744.1 1069.7,750.0 1069.7,740.1 1069.8,761.9 1069.9,736.2 1069.9,754.0 1070.0,765.9 1070.1,734.2 1070.1,754.0 1070.2,744.1 1070.3,750.0 1070.3,736.2 1070.4,736.2 1070.5,736.2 1070.6,740.1 1070.6,763.9 1070.7,765.9 1070.8,746.1 1070.8,758.0 1070.9,744.1 1071.0,746.1 1071.0,761.9 1071.1,758.0 1071.2,759.9 1071.2,758.0 1071.3,750.0 1071.4,740.1 1071.4,734.2 1071.5,758.0 1071.6,754.0 1071.6,732.2 1071.7,738.2 1071.8,746.1 1071.8,771.8 1071.9,758.0 1072.0,746.1 1072.1,754.0 1072.1,728.3 1072.2,748.1 1072.3,746.1 1072.3,759.9 1072.4,758.0 1072.5,756.0 1072.5,754.0 1072.6,750.0 1072.7,744.1 1072.7,746.1 1072.8,738.2 1072.9,761.9 1072.9,746.1 1073.0,746.1 1073.1,732.2 1073.1,750.0 1073.2,744.1 1073.3,756.0 1073.3,744.1 1073.4,744.1 1073.5,754.0 1073.6,752.0 1073.6,748.1 1073.7,742.1 1073.8,759.9 1073.8,738.2 1073.9,752.0 1074.0,728.3 1074.0,732.2 1074.1,752.0 1074.2,754.0 1074.2,722.3 1074.3,742.1 1074.4,742.1 1074.4,752.0 1074.5,750.0 1074.6,740.1 1074.6,742.1 1074.7,756.0 1074.8,734.2 1074.8,744.1 1074.9,758.0 1075.0,738.2 1075.1,750.0 1075.1,740.1 1075.2,754.0 1075.3,744.1 1075.3,765.9 1075.4,744.1 1075.5,763.9 1075.5,746.1 1075.6,773.8 1075.7,748.1 1075.7,740.1 1075.8,742.1 1075.9,736.2 1075.9,759.9 1076.0,732.2 1076.1,732.2 1076.1,759.9 1076.2,756.0 1076.3,754.0 1076.3,748.1 1076.4,746.1 1076.5,773.8 1076.6,742.1 1076.6,750.0 1076.7,758.0 1076.8,738.2 1076.8,752.0 1076.9,736.2 1077.0,742.1 1077.0,752.0 1077.1,736.2 1077.2,740.1 1077.2,754.0 1077.3,763.9 1077.4,754.0 1077.4,742.1 1077.5,750.0 1077.6,730.2 1077.6,746.1 1077.7,746.1 1077.8,744.1 1077.8,758.0 1077.9,750.0 1078.0,754.0 1078.1,771.8 1078.1,765.9 1078.2,714.4 1078.3,752.0 1078.3,750.0 1078.4,763.9 1078.5,754.0 1078.5,740.1 1078.6,748.1 1078.7,754.0 1078.7,732.2 1078.8,748.1 1078.9,752.0 1078.9,736.2 1079.0,765.9 1079.1,742.1 1079.1,759.9 1079.2,756.0 1079.3,756.0 1079.3,746.1 1079.4,746.1 1079.5,744.1 1079.6,746.1 1079.6,734.2 1079.7,730.2 1079.8,740.1 1079.8,740.1 1079.9,752.0 1080.0,759.9 1080.0,742.1 1080.1,748.1 1080.2,740.1 1080.2,767.9 1080.3,720.3 1080.4,761.9 1080.4,748.1 1080.5,738.2 1080.6,761.9 1080.6,754.0 1080.7,769.8 1080.8,763.9 1080.8,767.9 1080.9,746.1 1081.0,744.1 1081.1,752.0 1081.1,734.2 1081.2,734.2 1081.3,748.1 1081.3,750.0 1081.4,750.0 1081.5,752.0 1081.5,734.2 1081.6,746.1 1081.7,752.0 1081.7,750.0 1081.8,742.1 1081.9,752.0 1081.9,744.1 1082.0,748.1 1082.1,734.2 1082.1,736.2 1082.2,761.9 1082.3,750.0 1082.4,740.1 1082.4,752.0 1082.5,740.1 1082.6,744.1 1082.6,742.1 1082.7,748.1 1082.8,744.1 1082.8,742.1 1082.9,763.9 1083.0,758.0 1083.0,758.0 1083.1,730.2 1083.2,744.1 1083.2,744.1 1083.3,746.1 1083.4,754.0 1083.4,756.0 1083.5,740.1 1083.6,752.0 1083.6,732.2 1083.7,746.1 1083.8,746.1 1083.9,750.0 1083.9,748.1 1084.0,748.1 1084.1,732.2 1084.1,724.3 1084.2,759.9 1084.3,746.1 1084.3,740.1 1084.4,758.0 1084.5,754.0 1084.5,752.0 1084.6,773.8 1084.7,742.1 1084.7,748.1 1084.8,748.1 1084.9,748.1 1084.9,746.1 1085.0,724.3 1085.1,746.1 1085.1,740.1 1085.2,754.0 1085.3,744.1 1085.4,752.0 1085.4,750.0 1085.5,758.0 1085.6,756.0 1085.6,744.1 1085.7,740.1 1085.8,744.1 1085.8,754.0 1085.9,744.1 1086.0,773.8 1086.0,738.2 1086.1,748.1 1086.2,746.1 1086.2,736.2 1086.3,752.0 1086.4,738.2 1086.4,752.0 1086.5,742.1 1086.6,752.0 1086.6,744.1 1086.7,732.2 1086.8,754.0 1086.9,754.0 1086.9,752.0 1087.0,744.1 1087.1,720.3 1087.1,754.0 1087.2,769.8 1087.3,754.0 1087.3,763.9 1087.4,754.0 1087.5,748.1 1087.5,758.0 1087.6,754.0 1087.7,767.9 1087.7,746.1 1087.8,756.0 1087.9,736.2 1087.9,736.2 1088.0,756.0 1088.1,752.0 1088.1,748.1 1088.2,740.1 1088.3,765.9 1088.4,748.1 1088.4,728.3 1088.5,748.1 1088.6,746.1 1088.6,748.1 1088.7,759.9 1088.8,738.2 1088.8,744.1 1088.9,746.1 1089.0,740.1 1089.0,740.1 1089.1,767.9 1089.2,742.1 1089.2,754.0 1089.3,746.1 1089.4,754.0 1089.4,756.0 1089.5,738.2 1089.6,748.1 1089.6,750.0 1089.7,750.0 1089.8,746.1 1089.9,748.1 1089.9,771.8 1090.0,756.0 1090.1,750.0 1090.1,740.1 1090.2,734.2 1090.3,758.0 1090.3,728.3 1090.4,746.1 1090.5,742.1 1090.5,752.0 1090.6,754.0 1090.7,732.2 1090.7,750.0 1090.8,748.1 1090.9,736.2 1090.9,730.2 1091.0,761.9 1091.1,750.0 1091.1,748.1 1091.2,728.3 1091.3,722.3 1091.4,748.1 1091.4,744.1 1091.5,738.2 1091.6,736.2 1091.6,750.0 1091.7,738.2 1091.8,754.0 1091.8,773.8 1091.9,761.9 1092.0,744.1 1092.0,738.2 1092.1,769.8 1092.2,765.9 1092.2,748.1 1092.3,777.8 1092.4,742.1 1092.4,736.2 1092.5,777.8 1092.6,738.2 1092.6,748.1 1092.7,732.2 1092.8,744.1 1092.9,750.0 1092.9,746.1 1093.0,736.2 1093.1,744.1 1093.1,746.1 1093.2,761.9 1093.3,742.1 1093.3,746.1 1093.4,728.3 1093.5,746.1 1093.5,748.1 1093.6,754.0 1093.7,740.1 1093.7,748.1 1093.8,754.0 1093.9,730.2 1093.9,728.3 1094.0,752.0 1094.1,758.0 1094.1,734.2 1094.2,756.0 1094.3,718.4 1094.4,748.1 1094.4,736.2 1094.5,759.9 1094.6,746.1 1094.6,736.2 1094.7,742.1 1094.8,752.0 1094.8,720.3 1094.9,738.2 1095.0,748.1 1095.0,752.0 1095.1,750.0 1095.2,732.2 1095.2,754.0 1095.3,746.1 1095.4,754.0 1095.4,734.2 1095.5,748.1 1095.6,738.2 1095.6,740.1 1095.7,752.0 1095.8,740.1 1095.9,736.2 1095.9,758.0 1096.0,740.1 1096.1,716.4 1096.1,750.0 1096.2,740.1 1096.3,759.9 1096.3,742.1 1096.4,752.0 1096.5,738.2 1096.5,746.1 1096.6,758.0 1096.7,734.2 1096.7,748.1 1096.8,758.0 1096.9,746.1 1096.9,756.0 1097.0,742.1 1097.1,748.1 1097.1,750.0 1097.2,740.1 1097.3,759.9 1097.4,736.2 1097.4,767.9 1097.5,730.2 1097.6,744.1 1097.6,750.0 1097.7,754.0 1097.8,740.1 1097.8,748.1 1097.9,748.1 1098.0,736.2 1098.0,750.0 1098.1,748.1 1098.2,742.1 1098.2,736.2 1098.3,748.1 1098.4,744.1 1098.4,746.1 1098.5,738.2 1098.6,730.2 1098.7,756.0 1098.7,748.1 1098.8,746.1 1098.9,740.1 1098.9,730.2 1099.0,746.1 1099.1,744.1 1099.1,734.2 1099.2,759.9 1099.3,754.0 1099.3,752.0 1099.4,746.1 1099.5,744.1 1099.5,752.0 1099.6,728.3 1099.7,754.0 1099.7,748.1 1099.8,734.2 1099.9,738.2 1099.9,746.1 1100.0,742.1 1100.1,738.2 1100.2,746.1 1100.2,740.1 1100.3,756.0 1100.4,746.1 1100.4,763.9 1100.5,756.0 1100.6,758.0 1100.6,734.2 1100.7,752.0 1100.8,744.1 1100.8,756.0 1100.9,748.1 1101.0,750.0 1101.0,756.0 1101.1,738.2 1101.2,763.9 1101.2,740.1 1101.3,718.4 1101.4,756.0 1101.4,746.1 1101.5,763.9 1101.6,746.1 1101.7,765.9 1101.7,740.1 1101.8,752.0 1101.9,765.9 1101.9,759.9 1102.0,763.9 1102.1,750.0 1102.1,738.2 1102.2,752.0 1102.3,759.9 1102.3,756.0 1102.4,746.1 1102.5,771.8 1102.5,740.1 1102.6,742.1 1102.7,773.8 1102.7,734.2 1102.8,763.9 1102.9,750.0 1102.9,734.2 1103.0,763.9 1103.1,767.9 1103.2,759.9 1103.2,758.0 1103.3,748.1 1103.4,754.0 1103.4,752.0 1103.5,752.0 1103.6,750.0 1103.6,756.0 1103.7,744.1 1103.8,748.1 1103.8,758.0 1103.9,728.3 1104.0,761.9 1104.0,740.1 1104.1,756.0 1104.2,744.1 1104.2,742.1 1104.3,738.2 1104.4,732.2 1104.4,756.0 1104.5,718.4 1104.6,744.1 1104.7,756.0 1104.7,761.9 1104.8,722.3 1104.9,730.2 1104.9,748.1 1105.0,740.1 1105.1,734.2 1105.1,746.1 1105.2,752.0 1105.3,748.1 1105.3,738.2 1105.4,746.1 1105.5,759.9 1105.5,740.1 1105.6,765.9 1105.7,756.0 1105.7,734.2 1105.8,744.1 1105.9,744.1 1105.9,746.1 1106.0,736.2 1106.1,748.1 1106.2,767.9 1106.2,744.1 1106.3,777.8 1106.4,769.8 1106.4,730.2 1106.5,736.2 1106.6,752.0 1106.6,748.1 1106.7,746.1 1106.8,736.2 1106.8,756.0 1106.9,756.0 1107.0,754.0 1107.0,746.1 1107.1,744.1 1107.2,752.0 1107.2,740.1 1107.3,758.0 1107.4,748.1 1107.4,754.0 1107.5,758.0 1107.6,734.2 1107.7,750.0 1107.7,758.0 1107.8,746.1 1107.9,758.0 1107.9,740.1 1108.0,738.2 1108.1,736.2 1108.1,758.0 1108.2,748.1 1108.3,728.3 1108.3,750.0 1108.4,734.2 1108.5,732.2 1108.5,761.9 1108.6,734.2 1108.7,740.1 1108.7,738.2 1108.8,730.2 1108.9,742.1 1108.9,746.1 1109.0,740.1 1109.1,750.0 1109.2,742.1 1109.2,767.9 1109.3,728.3 1109.4,752.0 1109.4,742.1 1109.5,744.1 1109.6,746.1 1109.6,746.1 1109.7,746.1 1109.8,763.9 1109.8,754.0 1109.9,734.2 1110.0,758.0 1110.0,758.0 1110.1,724.3 1110.2,734.2 1110.2,730.2 1110.3,748.1 1110.4,744.1 1110.4,740.1 1110.5,742.1 1110.6,748.1 1110.7,761.9 1110.7,756.0 1110.8,763.9 1110.9,730.2 1110.9,752.0 1111.0,750.0 1111.1,744.1 1111.1,748.1 1111.2,742.1 1111.3,754.0 1111.3,763.9 1111.4,728.3 1111.5,756.0 1111.5,752.0 1111.6,756.0 1111.7,754.0 1111.7,748.1 1111.8,740.1 1111.9,758.0 1111.9,744.1 1112.0,754.0 1112.1,734.2 1112.2,759.9 1112.2,746.1 1112.3,740.1 1112.4,761.9 1112.4,746.1 1112.5,746.1 1112.6,756.0 1112.6,750.0 1112.7,738.2 1112.8,746.1 1112.8,752.0 1112.9,750.0 1113.0,742.1 1113.0,734.2 1113.1,740.1 1113.2,740.1 1113.2,732.2 1113.3,763.9 1113.4,761.9 1113.4,771.8 1113.5,740.1 1113.6,771.8 1113.7,748.1 1113.7,740.1 1113.8,761.9 1113.9,754.0 1113.9,750.0 1114.0,740.1 1114.1,763.9 1114.1,744.1 1114.2,740.1 1114.3,746.1 1114.3,746.1 1114.4,734.2 1114.5,746.1 1114.5,748.1 1114.6,752.0 1114.7,742.1 1114.7,750.0 1114.8,742.1 1114.9,746.1 1114.9,736.2 1115.0,756.0 1115.1,748.1 1115.2,744.1 1115.2,744.1 1115.3,736.2 1115.4,744.1 1115.4,738.2 1115.5,728.3 1115.6,740.1 1115.6,758.0 1115.7,761.9 1115.8,740.1 1115.8,752.0 1115.9,744.1 1116.0,750.0 1116.0,734.2 1116.1,736.2 1116.2,759.9 1116.2,746.1 1116.3,752.0 1116.4,761.9 1116.5,742.1 1116.5,750.0 1116.6,744.1 1116.7,722.3 1116.7,734.2 1116.8,736.2 1116.9,752.0 1116.9,759.9 1117.0,734.2 1117.1,752.0 1117.1,748.1 1117.2,752.0 1117.3,746.1 1117.3,722.3 1117.4,752.0 1117.5,750.0 1117.5,746.1 1117.6,746.1 1117.7,759.9 1117.7,765.9 1117.8,754.0 1117.9,750.0 1118.0,756.0 1118.0,758.0 1118.1,758.0 1118.2,752.0 1118.2,750.0 1118.3,765.9 1118.4,754.0 1118.4,744.1 1118.5,750.0 1118.6,761.9 1118.6,752.0 1118.7,748.1 1118.8,740.1 1118.8,765.9 1118.9,742.1 1119.0,754.0 1119.0,746.1 1119.1,742.1 1119.2,758.0 1119.2,756.0 1119.3,750.0 1119.4,740.1 1119.5,754.0 1119.5,763.9 1119.6,756.0 1119.7,744.1 1119.7,736.2 1119.8,754.0 1119.9,752.0 1119.9,750.0 1120.0,750.0 1120.1,758.0 1120.1,754.0 1120.2,746.1 1120.3,748.1 1120.3,748.1 1120.4,758.0 1120.5,754.0 1120.5,756.0 1120.6,738.2 1120.7,734.2 1120.7,744.1 1120.8,732.2 1120.9,752.0 1121.0,752.0 1121.0,761.9 1121.1,746.1 1121.2,754.0 1121.2,748.1 1121.3,744.1 1121.4,750.0 1121.4,759.9 1121.5,748.1 1121.6,750.0 1121.6,748.1 1121.7,742.1 1121.8,750.0 1121.8,752.0 1121.9,730.2 1122.0,738.2 1122.0,750.0 1122.1,758.0 1122.2,752.0 1122.2,744.1 1122.3,740.1 1122.4,724.3 1122.5,750.0 1122.5,746.1 1122.6,752.0 1122.7,748.1 1122.7,752.0 1122.8,759.9 1122.9,738.2 1122.9,746.1 1123.0,734.2 1123.1,754.0 1123.1,746.1 1123.2,742.1 1123.3,767.9 1123.3,761.9 1123.4,740.1 1123.5,746.1 1123.5,765.9 1123.6,756.0 1123.7,758.0 1123.7,752.0 1123.8,732.2 1123.9,754.0 1124.0,728.3 1124.0,750.0 1124.1,756.0 1124.2,732.2 1124.2,738.2 1124.3,734.2 1124.4,728.3 1124.4,736.2 1124.5,736.2 1124.6,765.9 1124.6,756.0 1124.7,744.1 1124.8,746.1 1124.8,740.1 1124.9,752.0 1125.0,736.2 1125.0,726.3 1125.1,742.1 1125.2,738.2 1125.2,742.1 1125.3,738.2 1125.4,746.1 1125.5,752.0 1125.5,746.1 1125.6,746.1 1125.7,763.9 1125.7,746.1 1125.8,748.1 1125.9,746.1 1125.9,754.0 1126.0,742.1 1126.1,742.1 1126.1,754.0 1126.2,744.1 1126.3,740.1 1126.3,740.1 1126.4,758.0 1126.5,758.0 1126.5,748.1 1126.6,758.0 1126.7,722.3 1126.7,756.0 1126.8,756.0 1126.9,742.1 1127.0,752.0 1127.0,771.8 1127.1,750.0 1127.2,758.0 1127.2,754.0 1127.3,763.9 1127.4,758.0 1127.4,750.0 1127.5,748.1 1127.6,759.9 1127.6,756.0 1127.7,758.0 1127.8,746.1 1127.8,750.0 1127.9,761.9 1128.0,742.1 1128.0,756.0 1128.1,744.1 1128.2,758.0 1128.2,746.1 1128.3,750.0 1128.4,748.1 1128.5,744.1 1128.5,744.1 1128.6,746.1 1128.7,746.1 1128.7,761.9 1128.8,750.0 1128.9,771.8 1128.9,771.8 1129.0,752.0 1129.1,750.0 1129.1,734.2 1129.2,742.1 1129.3,738.2 1129.3,752.0 1129.4,744.1 1129.5,736.2 1129.5,744.1 1129.6,744.1 1129.7,748.1 1129.7,758.0 1129.8,758.0 1129.9,763.9 1130.0,744.1 1130.0,752.0 1130.1,756.0 1130.2,744.1 1130.2,754.0 1130.3,738.2 1130.4,728.3 1130.4,744.1 1130.5,756.0 1130.6,763.9 1130.6,728.3 1130.7,744.1 1130.8,759.9 1130.8,738.2 1130.9,765.9 1131.0,752.0 1131.0,750.0 1131.1,752.0 1131.2,759.9 1131.2,724.3 1131.3,752.0 1131.4,744.1 1131.5,748.1 1131.5,763.9 1131.6,754.0 1131.7,746.1 1131.7,738.2 1131.8,752.0 1131.9,744.1 1131.9,752.0 1132.0,742.1 1132.1,773.8 1132.1,742.1 1132.2,754.0 1132.3,754.0 1132.3,777.8 1132.4,759.9 1132.5,742.1 1132.5,724.3 1132.6,756.0 1132.7,754.0 1132.8,744.1 1132.8,746.1 1132.9,754.0 1133.0,750.0 1133.0,752.0 1133.1,742.1 1133.2,740.1 1133.2,730.2 1133.3,738.2 1133.4,742.1 1133.4,746.1 1133.5,738.2 1133.6,758.0 1133.6,726.3 1133.7,746.1 1133.8,734.2 1133.8,756.0 1133.9,738.2 1134.0,744.1 1134.0,750.0 1134.1,754.0 1134.2,758.0 1134.3,730.2 1134.3,736.2 1134.4,746.1 1134.5,746.1 1134.5,756.0 1134.6,767.9 1134.7,765.9 1134.7,754.0 1134.8,750.0 1134.9,759.9 1134.9,740.1 1135.0,742.1 1135.1,746.1 1135.1,765.9 1135.2,750.0 1135.3,748.1 1135.3,761.9 1135.4,769.8 1135.5,728.3 1135.5,742.1 1135.6,752.0 1135.7,732.2 1135.8,736.2 1135.8,744.1 1135.9,746.1 1136.0,740.1 1136.0,732.2 1136.1,748.1 1136.2,750.0 1136.2,742.1 1136.3,777.8 1136.4,748.1 1136.4,752.0 1136.5,748.1 1136.6,750.0 1136.6,744.1 1136.7,746.1 1136.8,748.1 1136.8,750.0 1136.9,744.1 1137.0,754.0 1137.0,738.2 1137.1,765.9 1137.2,746.1 1137.3,744.1 1137.3,761.9 1137.4,752.0 1137.5,734.2 1137.5,750.0 1137.6,758.0 1137.7,777.8 1137.7,744.1 1137.8,746.1 1137.9,742.1 1137.9,726.3 1138.0,748.1 1138.1,746.1 1138.1,756.0 1138.2,748.1 1138.3,748.1 1138.3,740.1 1138.4,742.1 1138.5,756.0 1138.5,752.0 1138.6,734.2 1138.7,758.0 1138.8,740.1 1138.8,732.2 1138.9,742.1 1139.0,746.1 1139.0,734.2 1139.1,744.1 1139.2,748.1 1139.2,750.0 1139.3,736.2 1139.4,740.1 1139.4,732.2 1139.5,752.0 1139.6,752.0 1139.6,752.0 1139.7,746.1 1139.8,756.0 1139.8,738.2 1139.9,744.1 1140.0,758.0 1140.0,777.8 1140.1,765.9 1140.2,734.2 1140.3,748.1 1140.3,746.1 1140.4,752.0 1140.5,744.1 1140.5,767.9 1140.6,767.9 1140.7,765.9 1140.7,748.1 1140.8,740.1 1140.9,744.1 1140.9,750.0 1141.0,761.9 1141.1,740.1 1141.1,750.0 1141.2,748.1 1141.3,748.1 1141.3,752.0 1141.4,756.0 1141.5,754.0 1141.5,761.9 1141.6,746.1 1141.7,750.0 1141.8,738.2 1141.8,765.9 1141.9,736.2 1142.0,748.1 1142.0,750.0 1142.1,756.0 1142.2,756.0 1142.2,763.9 1142.3,738.2 1142.4,750.0 1142.4,740.1 1142.5,740.1 1142.6,754.0 1142.6,750.0 1142.7,752.0 1142.8,738.2 1142.8,746.1 1142.9,746.1 1143.0,740.1 1143.0,748.1 1143.1,726.3 1143.2,758.0 1143.3,734.2 1143.3,734.2 1143.4,759.9 1143.5,740.1 1143.5,746.1 1143.6,738.2 1143.7,759.9 1143.7,746.1 1143.8,758.0 1143.9,752.0 1143.9,734.2 1144.0,750.0 1144.1,771.8 1144.1,761.9 1144.2,759.9 1144.3,738.2 1144.3,756.0 1144.4,763.9 1144.5,736.2 1144.5,746.1 1144.6,744.1 1144.7,756.0 1144.8,734.2 1144.8,750.0 1144.9,767.9 1145.0,759.9 1145.0,756.0 1145.1,750.0 1145.2,740.1 1145.2,756.0 1145.3,754.0 1145.4,726.3 1145.4,748.1 1145.5,754.0 1145.6,748.1 1145.6,761.9 1145.7,742.1 1145.8,738.2 1145.8,754.0 1145.9,738.2 1146.0,752.0 1146.0,746.1 1146.1,756.0 1146.2,756.0 1146.3,763.9 1146.3,746.1 1146.4,750.0 1146.5,750.0 1146.5,759.9 1146.6,759.9 1146.7,754.0 1146.7,744.1 1146.8,744.1 1146.9,756.0 1146.9,744.1 1147.0,730.2 1147.1,746.1 1147.1,726.3 1147.2,744.1 1147.3,734.2 1147.3,754.0 1147.4,736.2 1147.5,759.9 1147.5,746.1 1147.6,752.0 1147.7,767.9 1147.8,761.9 1147.8,736.2 1147.9,742.1 1148.0,734.2 1148.0,746.1 1148.1,777.8 1148.2,746.1 1148.2,754.0 1148.3,754.0 1148.4,752.0 1148.4,756.0 1148.5,758.0 1148.6,736.2 1148.6,744.1 1148.7,754.0 1148.8,752.0 1148.8,738.2 1148.9,744.1 1149.0,746.1 1149.0,759.9 1149.1,752.0 1149.2,759.9 1149.3,767.9 1149.3,738.2 1149.4,752.0 1149.5,752.0 1149.5,758.0 1149.6,740.1 1149.7,726.3 1149.7,742.1 1149.8,738.2 1149.9,761.9 1149.9,746.1 1150.0,746.1 1150.1,732.2 1150.1,748.1 1150.2,758.0 1150.3,748.1 1150.3,752.0 1150.4,734.2 1150.5,742.1 1150.6,744.1 1150.6,746.1 1150.7,740.1 1150.8,754.0 1150.8,758.0 1150.9,767.9 1151.0,736.2 1151.0,742.1 1151.1,742.1 1151.2,748.1 1151.2,730.2 1151.3,758.0 1151.4,736.2 1151.4,756.0 1151.5,752.0 1151.6,759.9 1151.6,748.1 1151.7,752.0 1151.8,744.1 1151.8,754.0 1151.9,761.9 1152.0,742.1 1152.1,734.2 1152.1,740.1 1152.2,748.1 1152.3,744.1 1152.3,765.9 1152.4,752.0 1152.5,736.2 1152.5,744.1 1152.6,758.0 1152.7,740.1 1152.7,750.0 1152.8,740.1 1152.9,761.9 1152.9,754.0 1153.0,744.1 1153.1,746.1 1153.1,742.1 1153.2,748.1 1153.3,750.0 1153.3,744.1 1153.4,740.1 1153.5,763.9 1153.6,752.0 1153.6,750.0 1153.7,746.1 1153.8,738.2 1153.8,761.9 1153.9,742.1 1154.0,765.9 1154.0,756.0 1154.1,754.0 1154.2,752.0 1154.2,754.0 1154.3,754.0 1154.4,752.0 1154.4,752.0 1154.5,767.9 1154.6,761.9 1154.6,752.0 1154.7,742.1 1154.8,738.2 1154.8,718.4 1154.9,748.1 1155.0,756.0 1155.1,746.1 1155.1,742.1 1155.2,746.1 1155.3,759.9 1155.3,750.0 1155.4,748.1 1155.5,761.9 1155.5,759.9 1155.6,736.2 1155.7,771.8 1155.7,746.1 1155.8,750.0 1155.9,734.2 1155.9,742.1 1156.0,758.0 1156.1,736.2 1156.1,754.0 1156.2,728.3 1156.3,732.2 1156.3,750.0 1156.4,740.1 1156.5,746.1 1156.6,758.0 1156.6,738.2 1156.7,744.1 1156.8,740.1 1156.8,738.2 1156.9,734.2 1157.0,738.2 1157.0,750.0 1157.1,748.1 1157.2,744.1 1157.2,750.0 1157.3,750.0 1157.4,728.3 1157.4,744.1 1157.5,728.3 1157.6,756.0 1157.6,748.1 1157.7,752.0 1157.8,752.0 1157.8,752.0 1157.9,750.0 1158.0,752.0 1158.1,730.2 1158.1,742.1 1158.2,756.0 1158.3,754.0 1158.3,740.1 1158.4,742.1 1158.5,754.0 1158.5,738.2 1158.6,761.9 1158.7,752.0 1158.7,730.2 1158.8,773.8 1158.9,750.0 1158.9,738.2 1159.0,750.0 1159.1,756.0 1159.1,758.0 1159.2,769.8 1159.3,761.9 1159.3,748.1 1159.4,754.0 1159.5,748.1 1159.6,750.0 1159.6,746.1 1159.7,765.9 1159.8,752.0 1159.8,752.0 1159.9,752.0 1160.0,758.0 1160.0,769.8 1160.1,742.1 1160.2,740.1 1160.2,724.3 1160.3,740.1 1160.4,732.2 1160.4,742.1 1160.5,752.0 1160.6,742.1 1160.6,759.9 1160.7,746.1 1160.8,750.0 1160.8,758.0 1160.9,736.2 1161.0,736.2 1161.1,744.1 1161.1,740.1 1161.2,732.2 1161.3,750.0 1161.3,761.9 1161.4,758.0 1161.5,740.1 1161.5,746.1 1161.6,763.9 1161.7,734.2 1161.7,746.1 1161.8,732.2 1161.9,736.2 1161.9,752.0 1162.0,746.1 1162.1,756.0 1162.1,756.0 1162.2,750.0 1162.3,742.1 1162.3,734.2 1162.4,758.0 1162.5,740.1 1162.6,748.1 1162.6,750.0 1162.7,736.2 1162.8,752.0 1162.8,734.2 1162.9,752.0 1163.0,758.0 1163.0,740.1 1163.1,761.9 1163.2,759.9 1163.2,750.0 1163.3,748.1 1163.4,750.0 1163.4,779.7 1163.5,761.9 1163.6,742.1 1163.6,742.1 1163.7,758.0 1163.8,744.1 1163.8,746.1 1163.9,738.2 1164.0,756.0 1164.1,732.2 1164.1,750.0 1164.2,732.2 1164.3,738.2 1164.3,758.0 1164.4,750.0 1164.5,744.1 1164.5,738.2 1164.6,761.9 1164.7,752.0 1164.7,742.1 1164.8,742.1 1164.9,758.0 1164.9,756.0 1165.0,744.1 1165.1,758.0 1165.1,746.1 1165.2,738.2 1165.3,748.1 1165.3,775.8 1165.4,736.2 1165.5,736.2 1165.6,732.2 1165.6,738.2 1165.7,765.9 1165.8,732.2 1165.8,744.1 1165.9,738.2 1166.0,750.0 1166.0,750.0 1166.1,750.0 1166.2,732.2 1166.2,744.1 1166.3,750.0 1166.4,759.9 1166.4,742.1 1166.5,748.1 1166.6,746.1 1166.6,738.2 1166.7,740.1 1166.8,748.1 1166.8,746.1 1166.9,746.1 1167.0,740.1 1167.1,740.1 1167.1,746.1 1167.2,756.0 1167.3,738.2 1167.3,738.2 1167.4,758.0 1167.5,744.1 1167.5,752.0 1167.6,769.8 1167.7,748.1 1167.7,738.2 1167.8,756.0 1167.9,756.0 1167.9,738.2 1168.0,759.9 1168.1,758.0 1168.1,752.0 1168.2,742.1 1168.3,742.1 1168.4,754.0 1168.4,750.0 1168.5,746.1 1168.6,752.0 1168.6,756.0 1168.7,759.9 1168.8,740.1 1168.8,750.0 1168.9,718.4 1169.0,742.1 1169.0,756.0 1169.1,748.1 1169.2,744.1 1169.2,744.1 1169.3,744.1 1169.4,744.1 1169.4,750.0 1169.5,742.1 1169.6,726.3 1169.6,752.0 1169.7,752.0 1169.8,740.1 1169.9,734.2 1169.9,740.1 1170.0,736.2 1170.1,748.1 1170.1,750.0 1170.2,740.1 1170.3,740.1 1170.3,730.2 1170.4,732.2 1170.5,765.9 1170.5,740.1 1170.6,754.0 1170.7,769.8 1170.7,744.1 1170.8,750.0 1170.9,752.0 1170.9,761.9 1171.0,758.0 1171.1,750.0 1171.1,763.9 1171.2,748.1 1171.3,746.1 1171.4,750.0 1171.4,744.1 1171.5,748.1 1171.6,759.9 1171.6,758.0 1171.7,746.1 1171.8,738.2 1171.8,746.1 1171.9,754.0 1172.0,746.1 1172.0,765.9 1172.1,758.0 1172.2,752.0 1172.2,748.1 1172.3,752.0 1172.4,750.0 1172.4,759.9 1172.5,754.0 1172.6,746.1 1172.6,767.9 1172.7,759.9 1172.8,752.0 1172.9,732.2 1172.9,740.1 1173.0,732.2 1173.1,734.2 1173.1,752.0 1173.2,748.1 1173.3,759.9 1173.3,736.2 1173.4,740.1 1173.5,742.1 1173.5,742.1 1173.6,744.1 1173.7,746.1 1173.7,746.1 1173.8,736.2 1173.9,756.0 1173.9,758.0 1174.0,748.1 1174.1,736.2 1174.1,746.1 1174.2,750.0 1174.3,740.1 1174.4,746.1 1174.4,767.9 1174.5,758.0 1174.6,769.8 1174.6,750.0 1174.7,752.0 1174.8,744.1 1174.8,726.3 1174.9,754.0 1175.0,748.1 1175.0,752.0 1175.1,777.8 1175.2,756.0 1175.2,756.0 1175.3,746.1 1175.4,756.0 1175.4,761.9 1175.5,742.1 1175.6,748.1 1175.6,758.0 1175.7,756.0 1175.8,752.0 1175.9,740.1 1175.9,734.2 1176.0,761.9 1176.1,736.2 1176.1,748.1 1176.2,744.1 1176.3,738.2 1176.3,758.0 1176.4,740.1 1176.5,761.9 1176.5,752.0 1176.6,756.0 1176.7,730.2 1176.7,730.2 1176.8,740.1 1176.9,742.1 1176.9,754.0 1177.0,730.2 1177.1,734.2 1177.1,738.2 1177.2,750.0 1177.3,752.0 1177.4,748.1 1177.4,734.2 1177.5,758.0 1177.6,746.1 1177.6,730.2 1177.7,738.2 1177.8,730.2 1177.8,744.1 1177.9,744.1 1178.0,734.2 1178.0,740.1 1178.1,744.1 1178.2,752.0 1178.2,761.9 1178.3,732.2 1178.4,752.0 1178.4,756.0 1178.5,738.2 1178.6,756.0 1178.6,761.9 1178.7,754.0 1178.8,748.1 1178.9,744.1 1178.9,742.1 1179.0,738.2 1179.1,748.1 1179.1,744.1 1179.2,748.1 1179.3,754.0 1179.3,744.1 1179.4,744.1 1179.5,728.3 1179.5,742.1 1179.6,754.0 1179.7,742.1 1179.7,750.0 1179.8,732.2 1179.9,765.9 1179.9,754.0 1180.0,754.0 1180.1,746.1 1180.1,748.1 1180.2,763.9 1180.3,765.9 1180.4,746.1 1180.4,732.2 1180.5,732.2 1180.6,752.0 1180.6,742.1 1180.7,756.0 1180.8,761.9 1180.8,734.2 1180.9,740.1 1181.0,750.0 1181.0,752.0 1181.1,738.2 1181.2,744.1 1181.2,750.0 1181.3,744.1 1181.4,748.1 1181.4,752.0 1181.5,754.0 1181.6,738.2 1181.6,752.0 1181.7,759.9 1181.8,728.3 1181.9,734.2 1181.9,742.1 1182.0,748.1 1182.1,746.1 1182.1,761.9 1182.2,748.1 1182.3,744.1 1182.3,750.0 1182.4,742.1 1182.5,756.0 1182.5,746.1 1182.6,763.9 1182.7,748.1 1182.7,754.0 1182.8,761.9 1182.9,752.0 1182.9,748.1 1183.0,754.0 1183.1,738.2 1183.1,754.0 1183.2,738.2 1183.3,740.1 1183.4,754.0 1183.4,732.2 1183.5,761.9 1183.6,742.1 1183.6,746.1 1183.7,740.1 1183.8,763.9 1183.8,779.7" stroke="#0000ff" stroke-width="1.8" fill="none"/>
<rect x="911" y="688.7" width="274" height="120.5" fill="none" stroke="#000" stroke-width="1.5"/>
<text x="876.85" y="807.35" font-size="11.2" textLength="18.69" lengthAdjust="spacingAndGlyphs" fill="#000">740</text>
<text x="876.85" y="767.75" font-size="11.2" textLength="18.69" lengthAdjust="spacingAndGlyphs" fill="#000">760</text>
<text x="876.85" y="728.15" font-size="11.2" textLength="18.69" lengthAdjust="spacingAndGlyphs" fill="#000">780</text>
<text x="907.99" y="832.20" font-size="11.2" textLength="6.23" lengthAdjust="spacingAndGlyphs" fill="#000">0</text>
<text x="966.63" y="832.20" font-size="11.2" textLength="24.92" lengthAdjust="spacingAndGlyphs" fill="#000">1000</text>
<text x="1034.98" y="832.20" font-size="11.2" textLength="24.92" lengthAdjust="spacingAndGlyphs" fill="#000">2000</text>
<text x="1103.25" y="832.20" font-size="11.2" textLength="24.92" lengthAdjust="spacingAndGlyphs" fill="#000">3000</text>
<text x="1171.53" y="832.20" font-size="11.2" textLength="24.92" lengthAdjust="spacingAndGlyphs" fill="#000">4000</text>
<path d="M904.5,803.50H911M904.5,763.90H911M904.5,724.30H911M911.10,809.2V815.7M979.30,809.2V815.7M1047.50,809.2V815.7M1115.70,809.2V815.7M1183.90,809.2V815.7" stroke="#000" stroke-width="1.5" fill="none"/>
<text x="1045.16" y="849.60" font-size="11.2" textLength="7.47" lengthAdjust="spacingAndGlyphs" fill="#000">Y</text>
<text transform="translate(866.10,0) rotate(-90)" x="-768.50" y="0" font-size="11.2" textLength="34.73" lengthAdjust="spacingAndGlyphs" fill="#000">counts</text>
<text transform="translate(1192.90,0) rotate(90)" x="729.48" y="0" font-size="11.2" textLength="39.05" lengthAdjust="spacingAndGlyphs" fill="#000">cut in y</text>
<rect x="1109" y="691.5" width="73" height="16.4" rx="2" ry="2" fill="#fff" fill-opacity="0.8" stroke="#cccccc" stroke-width="1"/>
<line x1="1111.3" y1="699.8" x2="1133.7" y2="699.8" stroke="#0000ff" stroke-width="1.5"/>
<text x="1137.26" y="703.00" font-size="10.6" textLength="40.07" lengthAdjust="spacingAndGlyphs" fill="#000">x=1053</text>
</svg></body></html>
